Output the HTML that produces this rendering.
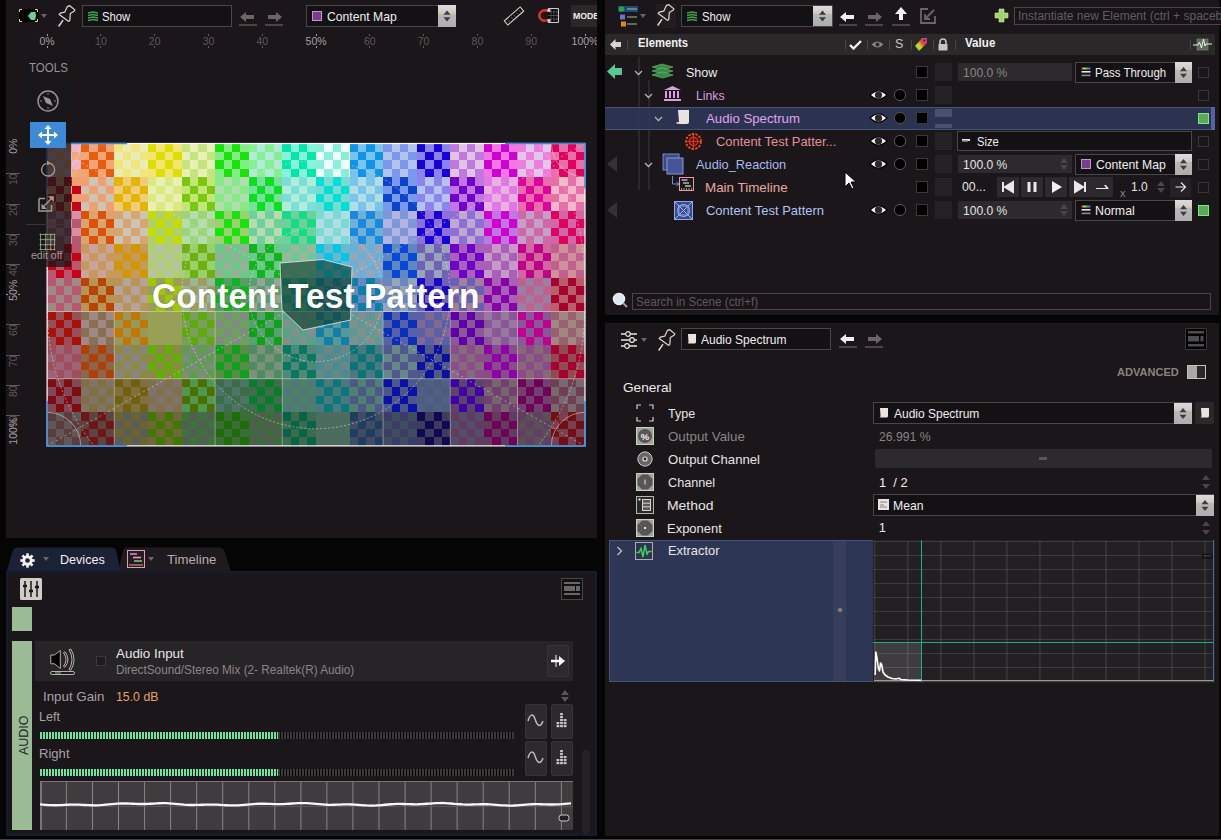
<!DOCTYPE html><html><head><meta charset="utf-8"><style>
*{box-sizing:border-box}
html{background:#050505;margin:0;padding:0;overflow:hidden}
body{margin:0;width:1221px;height:840px;background:#050505;position:relative;overflow:hidden;font-family:"Liberation Sans",sans-serif;color:#e8e4e6}
.a{position:absolute}
.pn{position:absolute;background:#1a1619}
.t{position:absolute;white-space:nowrap;line-height:1}
.cb{position:absolute;border:1px solid #4a4548;background:#141114}
.sp{position:absolute;background:linear-gradient(#dcdcdc 0%,#cccccc 34%,#d8c8a0 34%,#d8c8a0 40%,#b8b8b8 40%,#aeaeae 100%)}
.hdr{position:absolute;background:#2a2829}
</style></head><body>
<div class="pn" style="left:6px;top:0;width:591px;height:538px"></div>
<div class="a" style="left:19px;top:9px;width:20px;height:13px;background:#000"></div>
<svg class="a" style="left:18px;top:8px" width="24" height="16"><g stroke="#d8d4d0" stroke-width="1" fill="none"><path d="M1.5 4V1.5H4M17 1.5h2.5V4M19.5 11v2.5H17M4 13.5H1.5V11"/></g><path d="M10 8l3-4h4.5l0.5 4-1 4h-4z" fill="#68d098"/></svg>
<svg class="a" style="left:41px;top:14px" width="7" height="5"><path d="M0 0h6l-3 4z" fill="#6a6668"/></svg>
<svg class="a" style="left:56px;top:5px" width="22" height="24" viewBox="0 0 22 24"><g fill="none" stroke="#e0d8d0" stroke-width="1.2" stroke-linejoin="round"><path d="M11.4 1.4L13.8 0.7 18.9 4.9 18.1 6.2 14.3 8.6 13.8 15.4 12.8 16.4 3.2 9.4 4.3 8.1 8.7 7.2Z"/><path d="M7 15.2L2.7 21.5" stroke-width="1.5"/></g></svg>
<div class="cb" style="left:82px;top:5px;width:150px;height:22px"></div>
<svg class="a" style="left:87px;top:11px" width="12" height="11"><g stroke="#40a050" stroke-width="1.6"><path d="M1 2l5-1 5 1M1 4.5l5-1 5 1M1 7l5-1 5 1M1 9.5l5-1 5 1"/></g></svg>
<div class="t" style="left:101.90px;top:9.90px;font-size:13px;color:#f0ecee;font-weight:normal;transform:scaleX(0.8693);transform-origin:0 0;">Show</div>
<svg class="a" style="left:239px;top:11px" width="19" height="16"><path d="M1 6l6-5v3h8v4H7v3z" fill="#6e6468"/><rect x="0" y="13" width="18" height="2" fill="#4a4446"/></svg>
<svg class="a" style="left:265px;top:11px" width="19" height="16"><path d="M17 6l-6-5v3H3v4h8v3z" fill="#6e6468"/><rect x="0" y="13" width="18" height="2" fill="#4a4446"/></svg>
<div class="cb" style="left:306px;top:5px;width:150px;height:22px"></div>
<div class="a" style="left:312px;top:11px;width:10px;height:10px;background:#7a3f8a;border:1px solid #c890d8"></div>
<div class="t" style="left:327.10px;top:10.00px;font-size:13px;color:#f0ecee;font-weight:normal;transform:scaleX(0.9366);transform-origin:0 0;">Content Map</div>
<div class="sp" style="left:438px;top:5px;width:18px;height:22px"></div><svg class="a" style="left:438px;top:5px" width="18" height="22"><path d="M5.5 9.8l3.5-4.3 3.5 4.3z M5.5 12.2l3.5 4.3 3.5-4.3z" fill="#3e3c3c"/></svg>
<svg class="a" style="left:502px;top:5px" width="24" height="22"><g transform="rotate(-41 12 11)"><rect x="1.5" y="8.3" width="21" height="5.4" fill="#0a0a0a" stroke="#d8d0c8" stroke-width="1.1"/><path d="M5.5 10v2.5M9 10v2.5M12.5 10v2.5M16 10v2.5M19.5 10v2.5" stroke="#8a8a8a" stroke-width=".8"/></g></svg>
<svg class="a" style="left:537px;top:7px" width="24" height="18"><rect x="11" y="1.5" width="11" height="14" fill="#050505"/><path d="M14 1.5v14M17 1.5v14M20 1.5v14M11 5h11M11 8.5h11M11 12h11" stroke="#707070" stroke-width="0.6"/><path d="M11 1.5H21.5V15.5H11" fill="none" stroke="#e0e0e0" stroke-width="0.9"/><path d="M11.5 3.5H7.5a5 5 0 0 0 0 10h4" fill="none" stroke="#c81e14" stroke-width="2.8"/><path d="M11.5 3H7.5a5.5 5.5 0 0 0 0 11" fill="none" stroke="#f0a080" stroke-width=".7" opacity=".7"/><rect x="10.5" y="2.2" width="3" height="2.6" fill="#d0e0f0"/><rect x="10.5" y="12.2" width="3" height="2.6" fill="#d0e0f0"/></svg>
<div class="a" style="left:571px;top:5px;width:26px;height:22px;background:#2a2829;overflow:hidden"><div class="t" style="left:1.5px;top:6.6px;font-size:9px;font-weight:bold;color:#f0ecee;transform:scaleX(0.97);transform-origin:0 0">MODE</div></div>
<div class="t" style="left:17.1px;top:35.91px;width:60px;text-align:center;font-size:10.5px;color:#a8a0a2">0%</div>
<div class="a" style="left:46.6px;top:34px;width:1px;height:2px;background:#a8a0a2"></div>
<div class="a" style="left:46.6px;top:46px;width:1px;height:2px;background:#a8a0a2"></div>
<div class="t" style="left:-17.5px;top:141.3px;width:60px;text-align:center;font-size:10.5px;color:#a8a0a2;transform:rotate(-90deg)">0%</div>
<div class="t" style="left:70.9px;top:35.91px;width:60px;text-align:center;font-size:10.5px;color:#5e585a">10</div>
<div class="a" style="left:100.4px;top:34px;width:1px;height:2px;background:#5e585a"></div>
<div class="a" style="left:100.4px;top:46px;width:1px;height:2px;background:#5e585a"></div>
<div class="t" style="left:-17.5px;top:174.2px;width:60px;text-align:center;font-size:10.5px;color:#5e585a;transform:rotate(-90deg)">10</div>
<div class="a" style="left:6px;top:173.2px;width:14px;height:1px;background:#5e585a"></div>
<div class="t" style="left:124.7px;top:35.91px;width:60px;text-align:center;font-size:10.5px;color:#5e585a">20</div>
<div class="a" style="left:154.2px;top:34px;width:1px;height:2px;background:#5e585a"></div>
<div class="a" style="left:154.2px;top:46px;width:1px;height:2px;background:#5e585a"></div>
<div class="t" style="left:-17.5px;top:204.5px;width:60px;text-align:center;font-size:10.5px;color:#5e585a;transform:rotate(-90deg)">20</div>
<div class="a" style="left:6px;top:203.5px;width:14px;height:1px;background:#5e585a"></div>
<div class="t" style="left:178.5px;top:35.91px;width:60px;text-align:center;font-size:10.5px;color:#5e585a">30</div>
<div class="a" style="left:208.0px;top:34px;width:1px;height:2px;background:#5e585a"></div>
<div class="a" style="left:208.0px;top:46px;width:1px;height:2px;background:#5e585a"></div>
<div class="t" style="left:-17.5px;top:234.7px;width:60px;text-align:center;font-size:10.5px;color:#5e585a;transform:rotate(-90deg)">30</div>
<div class="a" style="left:6px;top:233.7px;width:14px;height:1px;background:#5e585a"></div>
<div class="t" style="left:232.3px;top:35.91px;width:60px;text-align:center;font-size:10.5px;color:#5e585a">40</div>
<div class="a" style="left:261.8px;top:34px;width:1px;height:2px;background:#5e585a"></div>
<div class="a" style="left:261.8px;top:46px;width:1px;height:2px;background:#5e585a"></div>
<div class="t" style="left:-17.5px;top:265.0px;width:60px;text-align:center;font-size:10.5px;color:#5e585a;transform:rotate(-90deg)">40</div>
<div class="a" style="left:6px;top:264.0px;width:14px;height:1px;background:#5e585a"></div>
<div class="t" style="left:286.1px;top:35.91px;width:60px;text-align:center;font-size:10.5px;color:#a8a0a2">50%</div>
<div class="a" style="left:315.6px;top:34px;width:1px;height:2px;background:#a8a0a2"></div>
<div class="a" style="left:315.6px;top:46px;width:1px;height:2px;background:#a8a0a2"></div>
<div class="t" style="left:-17.5px;top:285.0px;width:60px;text-align:center;font-size:10.5px;color:#a8a0a2;transform:rotate(-90deg)">50%</div>
<div class="a" style="left:6px;top:294.2px;width:2px;height:1px;background:#a8a0a2"></div><div class="a" style="left:18px;top:294.2px;width:2px;height:1px;background:#a8a0a2"></div>
<div class="t" style="left:339.8px;top:35.91px;width:60px;text-align:center;font-size:10.5px;color:#5e585a">60</div>
<div class="a" style="left:369.3px;top:34px;width:1px;height:2px;background:#5e585a"></div>
<div class="a" style="left:369.3px;top:46px;width:1px;height:2px;background:#5e585a"></div>
<div class="t" style="left:-17.5px;top:325.4px;width:60px;text-align:center;font-size:10.5px;color:#5e585a;transform:rotate(-90deg)">60</div>
<div class="a" style="left:6px;top:324.4px;width:14px;height:1px;background:#5e585a"></div>
<div class="t" style="left:393.6px;top:35.91px;width:60px;text-align:center;font-size:10.5px;color:#5e585a">70</div>
<div class="a" style="left:423.1px;top:34px;width:1px;height:2px;background:#5e585a"></div>
<div class="a" style="left:423.1px;top:46px;width:1px;height:2px;background:#5e585a"></div>
<div class="t" style="left:-17.5px;top:355.7px;width:60px;text-align:center;font-size:10.5px;color:#5e585a;transform:rotate(-90deg)">70</div>
<div class="a" style="left:6px;top:354.7px;width:14px;height:1px;background:#5e585a"></div>
<div class="t" style="left:447.4px;top:35.91px;width:60px;text-align:center;font-size:10.5px;color:#5e585a">80</div>
<div class="a" style="left:476.9px;top:34px;width:1px;height:2px;background:#5e585a"></div>
<div class="a" style="left:476.9px;top:46px;width:1px;height:2px;background:#5e585a"></div>
<div class="t" style="left:-17.5px;top:385.9px;width:60px;text-align:center;font-size:10.5px;color:#5e585a;transform:rotate(-90deg)">80</div>
<div class="a" style="left:6px;top:384.9px;width:14px;height:1px;background:#5e585a"></div>
<div class="t" style="left:501.2px;top:35.91px;width:60px;text-align:center;font-size:10.5px;color:#5e585a">90</div>
<div class="a" style="left:530.7px;top:34px;width:1px;height:2px;background:#5e585a"></div>
<div class="a" style="left:530.7px;top:46px;width:1px;height:2px;background:#5e585a"></div>
<div class="t" style="left:-17.5px;top:416.2px;width:60px;text-align:center;font-size:10.5px;color:#5e585a;transform:rotate(-90deg)">90</div>
<div class="a" style="left:6px;top:415.2px;width:14px;height:1px;background:#5e585a"></div>
<div class="t" style="left:555.0px;top:35.91px;width:60px;text-align:center;font-size:10.5px;color:#a8a0a2">100%</div>
<div class="a" style="left:584.5px;top:34px;width:1px;height:2px;background:#a8a0a2"></div>
<div class="a" style="left:584.5px;top:46px;width:1px;height:2px;background:#a8a0a2"></div>
<div class="t" style="left:-17.5px;top:425.5px;width:60px;text-align:center;font-size:10.5px;color:#a8a0a2;transform:rotate(-90deg)">100%</div>
<div class="a" style="left:597px;top:0;width:8px;height:540px;background:#050505"></div>
<svg style="position:absolute;left:0;top:0" width="1221" height="840" viewBox="0 0 1221 840">
<defs><path id="ck" d="M0 0h8.4v8.4H0zM16.8 0h8.4v8.4h-8.4zM8.4 8.4h8.4v8.4H8.4zM25.2 8.4h8.4v8.4h-8.4zM0 16.8h8.4v8.4H0zM16.8 16.8h8.4v8.4h-8.4zM8.4 25.2h8.4v8.4H8.4zM25.2 25.2h8.4v8.4h-8.4z"/></defs>
<g shape-rendering="crispEdges">
<rect x="47.1" y="143.5" width="33.6" height="33.6" fill="#ecb4cc"/><use href="#ck" x="47.1" y="143.5" fill="#f0a878"/>
<rect x="80.7" y="143.5" width="33.6" height="33.6" fill="#f0a478"/><use href="#ck" x="80.7" y="143.5" fill="#e85c0c"/>
<rect x="114.3" y="143.5" width="33.6" height="33.6" fill="#e8ecb8"/><use href="#ck" x="114.3" y="143.5" fill="#f4e47c"/>
<rect x="147.9" y="143.5" width="33.6" height="33.6" fill="#f4e474"/><use href="#ck" x="147.9" y="143.5" fill="#dce000"/>
<rect x="181.5" y="143.5" width="33.6" height="33.6" fill="#e8f0b8"/><use href="#ck" x="181.5" y="143.5" fill="#c4e47c"/>
<rect x="215.1" y="143.5" width="33.6" height="33.6" fill="#84ec84"/><use href="#ck" x="215.1" y="143.5" fill="#18e40c"/>
<rect x="248.7" y="143.5" width="33.6" height="33.6" fill="#b4e8d8"/><use href="#ck" x="248.7" y="143.5" fill="#84f094"/>
<rect x="282.3" y="143.5" width="33.6" height="33.6" fill="#84f4dc"/><use href="#ck" x="282.3" y="143.5" fill="#00e8a8"/>
<rect x="315.9" y="143.5" width="33.6" height="33.6" fill="#eefcfc"/><use href="#ck" x="315.9" y="143.5" fill="#88f0d8"/>
<rect x="349.5" y="143.5" width="33.6" height="33.6" fill="#78c4ec"/><use href="#ck" x="349.5" y="143.5" fill="#1094e8"/>
<rect x="383.1" y="143.5" width="33.6" height="33.6" fill="#b4c4ec"/><use href="#ck" x="383.1" y="143.5" fill="#7c98ec"/>
<rect x="416.7" y="143.5" width="33.6" height="33.6" fill="#8c84ec"/><use href="#ck" x="416.7" y="143.5" fill="#1800d8"/>
<rect x="450.3" y="143.5" width="33.6" height="33.6" fill="#e0c4e4"/><use href="#ck" x="450.3" y="143.5" fill="#c078e0"/>
<rect x="483.9" y="143.5" width="33.6" height="33.6" fill="#f078e0"/><use href="#ck" x="483.9" y="143.5" fill="#d000d0"/>
<rect x="517.5" y="143.5" width="33.6" height="33.6" fill="#e0c8e8"/><use href="#ck" x="517.5" y="143.5" fill="#f07ce0"/>
<rect x="551.1" y="143.5" width="33.6" height="33.6" fill="#e870a8"/><use href="#ck" x="551.1" y="143.5" fill="#e00060"/>
<rect x="47.1" y="177.1" width="33.6" height="33.6" fill="#f0a070"/><use href="#ck" x="47.1" y="177.1" fill="#c80018"/>
<rect x="80.7" y="177.1" width="33.6" height="33.6" fill="#ccc4b4"/><use href="#ck" x="80.7" y="177.1" fill="#f0a070"/>
<rect x="114.3" y="177.1" width="33.6" height="33.6" fill="#f0cc78"/><use href="#ck" x="114.3" y="177.1" fill="#e4b400"/>
<rect x="147.9" y="177.1" width="33.6" height="33.6" fill="#e8f0b4"/><use href="#ck" x="147.9" y="177.1" fill="#dce880"/>
<rect x="181.5" y="177.1" width="33.6" height="33.6" fill="#c4e47c"/><use href="#ck" x="181.5" y="177.1" fill="#78c80c"/>
<rect x="215.1" y="177.1" width="33.6" height="33.6" fill="#b4dcb0"/><use href="#ck" x="215.1" y="177.1" fill="#84ec84"/>
<rect x="248.7" y="177.1" width="33.6" height="33.6" fill="#78e09c"/><use href="#ck" x="248.7" y="177.1" fill="#08e020"/>
<rect x="282.3" y="177.1" width="33.6" height="33.6" fill="#b4ecdc"/><use href="#ck" x="282.3" y="177.1" fill="#78e0d8"/>
<rect x="315.9" y="177.1" width="33.6" height="33.6" fill="#78dcd4"/><use href="#ck" x="315.9" y="177.1" fill="#00e0d4"/>
<rect x="349.5" y="177.1" width="33.6" height="33.6" fill="#b4dce4"/><use href="#ck" x="349.5" y="177.1" fill="#78c4ec"/>
<rect x="383.1" y="177.1" width="33.6" height="33.6" fill="#7c98ec"/><use href="#ck" x="383.1" y="177.1" fill="#0844cc"/>
<rect x="416.7" y="177.1" width="33.6" height="33.6" fill="#b4c4ec"/><use href="#ck" x="416.7" y="177.1" fill="#8c84ec"/>
<rect x="450.3" y="177.1" width="33.6" height="33.6" fill="#c078e0"/><use href="#ck" x="450.3" y="177.1" fill="#7000cc"/>
<rect x="483.9" y="177.1" width="33.6" height="33.6" fill="#eab0e0"/><use href="#ck" x="483.9" y="177.1" fill="#e078e8"/>
<rect x="517.5" y="177.1" width="33.6" height="33.6" fill="#e870a8"/><use href="#ck" x="517.5" y="177.1" fill="#e000a0"/>
<rect x="551.1" y="177.1" width="33.6" height="33.6" fill="#f0b8c8"/><use href="#ck" x="551.1" y="177.1" fill="#e870a8"/>
<rect x="47.1" y="210.7" width="33.6" height="33.6" fill="#d890a8"/><use href="#ck" x="47.1" y="210.7" fill="#b85870"/>
<rect x="80.7" y="210.7" width="33.6" height="33.6" fill="#d8a470"/><use href="#ck" x="80.7" y="210.7" fill="#dc5008"/>
<rect x="114.3" y="210.7" width="33.6" height="33.6" fill="#ccc4b4"/><use href="#ck" x="114.3" y="210.7" fill="#d8a470"/>
<rect x="147.9" y="210.7" width="33.6" height="33.6" fill="#b0d070"/><use href="#ck" x="147.9" y="210.7" fill="#c4dc00"/>
<rect x="181.5" y="210.7" width="33.6" height="33.6" fill="#b4dcb0"/><use href="#ck" x="181.5" y="210.7" fill="#9cd478"/>
<rect x="215.1" y="210.7" width="33.6" height="33.6" fill="#9cd070"/><use href="#ck" x="215.1" y="210.7" fill="#18e40c"/>
<rect x="248.7" y="210.7" width="33.6" height="33.6" fill="#b4dcb0"/><use href="#ck" x="248.7" y="210.7" fill="#70d09c"/>
<rect x="282.3" y="210.7" width="33.6" height="33.6" fill="#70d09c"/><use href="#ck" x="282.3" y="210.7" fill="#14dc84"/>
<rect x="315.9" y="210.7" width="33.6" height="33.6" fill="#b4dce4"/><use href="#ck" x="315.9" y="210.7" fill="#78dcd4"/>
<rect x="349.5" y="210.7" width="33.6" height="33.6" fill="#70b0d4"/><use href="#ck" x="349.5" y="210.7" fill="#1888e0"/>
<rect x="383.1" y="210.7" width="33.6" height="33.6" fill="#b4b4e0"/><use href="#ck" x="383.1" y="210.7" fill="#7c98d8"/>
<rect x="416.7" y="210.7" width="33.6" height="33.6" fill="#9070d8"/><use href="#ck" x="416.7" y="210.7" fill="#1800d8"/>
<rect x="450.3" y="210.7" width="33.6" height="33.6" fill="#c0a8d0"/><use href="#ck" x="450.3" y="210.7" fill="#8c70d8"/>
<rect x="483.9" y="210.7" width="33.6" height="33.6" fill="#c078e0"/><use href="#ck" x="483.9" y="210.7" fill="#d000d0"/>
<rect x="517.5" y="210.7" width="33.6" height="33.6" fill="#c4a0c8"/><use href="#ck" x="517.5" y="210.7" fill="#d068a8"/>
<rect x="551.1" y="210.7" width="33.6" height="33.6" fill="#d068a8"/><use href="#ck" x="551.1" y="210.7" fill="#e00060"/>
<rect x="47.1" y="244.3" width="33.6" height="33.6" fill="#b85870"/><use href="#ck" x="47.1" y="244.3" fill="#c80018"/>
<rect x="80.7" y="244.3" width="33.6" height="33.6" fill="#c8a49c"/><use href="#ck" x="80.7" y="244.3" fill="#c8985c"/>
<rect x="114.3" y="244.3" width="33.6" height="33.6" fill="#c8985c"/><use href="#ck" x="114.3" y="244.3" fill="#d09800"/>
<rect x="147.9" y="244.3" width="33.6" height="33.6" fill="#b4c4a0"/><use href="#ck" x="147.9" y="244.3" fill="#b0d070"/>
<rect x="181.5" y="244.3" width="33.6" height="33.6" fill="#98d070"/><use href="#ck" x="181.5" y="244.3" fill="#70b00c"/>
<rect x="215.1" y="244.3" width="33.6" height="33.6" fill="#98b098"/><use href="#ck" x="215.1" y="244.3" fill="#6cc888"/>
<rect x="248.7" y="244.3" width="33.6" height="33.6" fill="#6cc888"/><use href="#ck" x="248.7" y="244.3" fill="#10b41c"/>
<rect x="282.3" y="244.3" width="33.6" height="33.6" fill="#98b898"/><use href="#ck" x="282.3" y="244.3" fill="#6cc898"/>
<rect x="315.9" y="244.3" width="33.6" height="33.6" fill="#70b4d4"/><use href="#ck" x="315.9" y="244.3" fill="#00c8e0"/>
<rect x="349.5" y="244.3" width="33.6" height="33.6" fill="#98a4b8"/><use href="#ck" x="349.5" y="244.3" fill="#68b0d8"/>
<rect x="383.1" y="244.3" width="33.6" height="33.6" fill="#6088c0"/><use href="#ck" x="383.1" y="244.3" fill="#0848d8"/>
<rect x="416.7" y="244.3" width="33.6" height="33.6" fill="#98a4b8"/><use href="#ck" x="416.7" y="244.3" fill="#7060b8"/>
<rect x="450.3" y="244.3" width="33.6" height="33.6" fill="#a860b8"/><use href="#ck" x="450.3" y="244.3" fill="#7000cc"/>
<rect x="483.9" y="244.3" width="33.6" height="33.6" fill="#c898c8"/><use href="#ck" x="483.9" y="244.3" fill="#a860b8"/>
<rect x="517.5" y="244.3" width="33.6" height="33.6" fill="#d068a0"/><use href="#ck" x="517.5" y="244.3" fill="#c00088"/>
<rect x="551.1" y="244.3" width="33.6" height="33.6" fill="#d09098"/><use href="#ck" x="551.1" y="244.3" fill="#c06090"/>
<rect x="47.1" y="277.9" width="33.6" height="33.6" fill="#a08888"/><use href="#ck" x="47.1" y="277.9" fill="#b85870"/>
<rect x="80.7" y="277.9" width="33.6" height="33.6" fill="#b89458"/><use href="#ck" x="80.7" y="277.9" fill="#b84400"/>
<rect x="114.3" y="277.9" width="33.6" height="33.6" fill="#b4a49c"/><use href="#ck" x="114.3" y="277.9" fill="#b89458"/>
<rect x="147.9" y="277.9" width="33.6" height="33.6" fill="#98a058"/><use href="#ck" x="147.9" y="277.9" fill="#a0c800"/>
<rect x="181.5" y="277.9" width="33.6" height="33.6" fill="#98b89c"/><use href="#ck" x="181.5" y="277.9" fill="#a09c60"/>
<rect x="215.1" y="277.9" width="33.6" height="33.6" fill="#589c68"/><use href="#ck" x="215.1" y="277.9" fill="#10b41c"/>
<rect x="248.7" y="277.9" width="33.6" height="33.6" fill="#98a498"/><use href="#ck" x="248.7" y="277.9" fill="#58a070"/>
<rect x="282.3" y="277.9" width="33.6" height="33.6" fill="#60a090"/><use href="#ck" x="282.3" y="277.9" fill="#10a080"/>
<rect x="315.9" y="277.9" width="33.6" height="33.6" fill="#6888b0"/><use href="#ck" x="315.9" y="277.9" fill="#0880a0"/>
<rect x="349.5" y="277.9" width="33.6" height="33.6" fill="#6888c0"/><use href="#ck" x="349.5" y="277.9" fill="#0880a8"/>
<rect x="383.1" y="277.9" width="33.6" height="33.6" fill="#98a4b8"/><use href="#ck" x="383.1" y="277.9" fill="#6888c0"/>
<rect x="416.7" y="277.9" width="33.6" height="33.6" fill="#7060b8"/><use href="#ck" x="416.7" y="277.9" fill="#1808c8"/>
<rect x="450.3" y="277.9" width="33.6" height="33.6" fill="#a08098"/><use href="#ck" x="450.3" y="277.9" fill="#6860b8"/>
<rect x="483.9" y="277.9" width="33.6" height="33.6" fill="#a860b8"/><use href="#ck" x="483.9" y="277.9" fill="#8800a8"/>
<rect x="517.5" y="277.9" width="33.6" height="33.6" fill="#9880a0"/><use href="#ck" x="517.5" y="277.9" fill="#c06090"/>
<rect x="551.1" y="277.9" width="33.6" height="33.6" fill="#b86068"/><use href="#ck" x="551.1" y="277.9" fill="#a80030"/>
<rect x="47.1" y="311.5" width="33.6" height="33.6" fill="#985058"/><use href="#ck" x="47.1" y="311.5" fill="#a81008"/>
<rect x="80.7" y="311.5" width="33.6" height="33.6" fill="#a08888"/><use href="#ck" x="80.7" y="311.5" fill="#887050"/>
<rect x="114.3" y="311.5" width="33.6" height="33.6" fill="#98985c"/><use href="#ck" x="114.3" y="311.5" fill="#c07800"/>
<rect x="147.9" y="311.5" width="33.6" height="33.6" fill="#98a058"/><use href="#ck" x="147.9" y="311.5" fill="#98a058"/>
<rect x="181.5" y="311.5" width="33.6" height="33.6" fill="#78a05c"/><use href="#ck" x="181.5" y="311.5" fill="#60a810"/>
<rect x="215.1" y="311.5" width="33.6" height="33.6" fill="#808c80"/><use href="#ck" x="215.1" y="311.5" fill="#70a060"/>
<rect x="248.7" y="311.5" width="33.6" height="33.6" fill="#58a070"/><use href="#ck" x="248.7" y="311.5" fill="#10a01c"/>
<rect x="282.3" y="311.5" width="33.6" height="33.6" fill="#80908c"/><use href="#ck" x="282.3" y="311.5" fill="#58a088"/>
<rect x="315.9" y="311.5" width="33.6" height="33.6" fill="#589898"/><use href="#ck" x="315.9" y="311.5" fill="#1080a8"/>
<rect x="349.5" y="311.5" width="33.6" height="33.6" fill="#80908c"/><use href="#ck" x="349.5" y="311.5" fill="#609898"/>
<rect x="383.1" y="311.5" width="33.6" height="33.6" fill="#5860a8"/><use href="#ck" x="383.1" y="311.5" fill="#0830b8"/>
<rect x="416.7" y="311.5" width="33.6" height="33.6" fill="#806890"/><use href="#ck" x="416.7" y="311.5" fill="#5860a8"/>
<rect x="450.3" y="311.5" width="33.6" height="33.6" fill="#885898"/><use href="#ck" x="450.3" y="311.5" fill="#6000a8"/>
<rect x="483.9" y="311.5" width="33.6" height="33.6" fill="#885898"/><use href="#ck" x="483.9" y="311.5" fill="#9878a0"/>
<rect x="517.5" y="311.5" width="33.6" height="33.6" fill="#885898"/><use href="#ck" x="517.5" y="311.5" fill="#c00090"/>
<rect x="551.1" y="311.5" width="33.6" height="33.6" fill="#a08880"/><use href="#ck" x="551.1" y="311.5" fill="#986070"/>
<rect x="47.1" y="345.1" width="33.6" height="33.6" fill="#9c6478"/><use href="#ck" x="47.1" y="345.1" fill="#a04e5c"/>
<rect x="80.7" y="345.1" width="33.6" height="33.6" fill="#8c6450"/><use href="#ck" x="80.7" y="345.1" fill="#b04000"/>
<rect x="114.3" y="345.1" width="33.6" height="33.6" fill="#888480"/><use href="#ck" x="114.3" y="345.1" fill="#8c8848"/>
<rect x="147.9" y="345.1" width="33.6" height="33.6" fill="#8c8848"/><use href="#ck" x="147.9" y="345.1" fill="#60b000"/>
<rect x="181.5" y="345.1" width="33.6" height="33.6" fill="#7c8c7c"/><use href="#ck" x="181.5" y="345.1" fill="#609c50"/>
<rect x="215.1" y="345.1" width="33.6" height="33.6" fill="#588c48"/><use href="#ck" x="215.1" y="345.1" fill="#10a01c"/>
<rect x="248.7" y="345.1" width="33.6" height="33.6" fill="#7c907c"/><use href="#ck" x="248.7" y="345.1" fill="#4c8c60"/>
<rect x="282.3" y="345.1" width="33.6" height="33.6" fill="#508878"/><use href="#ck" x="282.3" y="345.1" fill="#087860"/>
<rect x="315.9" y="345.1" width="33.6" height="33.6" fill="#688888"/><use href="#ck" x="315.9" y="345.1" fill="#4c8c90"/>
<rect x="349.5" y="345.1" width="33.6" height="33.6" fill="#4c7880"/><use href="#ck" x="349.5" y="345.1" fill="#087478"/>
<rect x="383.1" y="345.1" width="33.6" height="33.6" fill="#688888"/><use href="#ck" x="383.1" y="345.1" fill="#505890"/>
<rect x="416.7" y="345.1" width="33.6" height="33.6" fill="#505888"/><use href="#ck" x="416.7" y="345.1" fill="#0c10a0"/>
<rect x="450.3" y="345.1" width="33.6" height="33.6" fill="#846c7c"/><use href="#ck" x="450.3" y="345.1" fill="#8c4c8c"/>
<rect x="483.9" y="345.1" width="33.6" height="33.6" fill="#884c88"/><use href="#ck" x="483.9" y="345.1" fill="#9000a8"/>
<rect x="517.5" y="345.1" width="33.6" height="33.6" fill="#884c88"/><use href="#ck" x="517.5" y="345.1" fill="#886878"/>
<rect x="551.1" y="345.1" width="33.6" height="33.6" fill="#904c50"/><use href="#ck" x="551.1" y="345.1" fill="#a80030"/>
<rect x="47.1" y="378.7" width="33.6" height="33.6" fill="#804858"/><use href="#ck" x="47.1" y="378.7" fill="#800c10"/>
<rect x="80.7" y="378.7" width="33.6" height="33.6" fill="#807468"/><use href="#ck" x="80.7" y="378.7" fill="#807040"/>
<rect x="114.3" y="378.7" width="33.6" height="33.6" fill="#807040"/><use href="#ck" x="114.3" y="378.7" fill="#706010"/>
<rect x="147.9" y="378.7" width="33.6" height="33.6" fill="#807468"/><use href="#ck" x="147.9" y="378.7" fill="#807050"/>
<rect x="181.5" y="378.7" width="33.6" height="33.6" fill="#509850"/><use href="#ck" x="181.5" y="378.7" fill="#4c7000"/>
<rect x="215.1" y="378.7" width="33.6" height="33.6" fill="#4c7468"/><use href="#ck" x="215.1" y="378.7" fill="#3c6c48"/>
<rect x="248.7" y="378.7" width="33.6" height="33.6" fill="#406c50"/><use href="#ck" x="248.7" y="378.7" fill="#087c28"/>
<rect x="282.3" y="378.7" width="33.6" height="33.6" fill="#507878"/><use href="#ck" x="282.3" y="378.7" fill="#4c8068"/>
<rect x="315.9" y="378.7" width="33.6" height="33.6" fill="#4c7880"/><use href="#ck" x="315.9" y="378.7" fill="#087878"/>
<rect x="349.5" y="378.7" width="33.6" height="33.6" fill="#508070"/><use href="#ck" x="349.5" y="378.7" fill="#4c5888"/>
<rect x="383.1" y="378.7" width="33.6" height="33.6" fill="#4c5888"/><use href="#ck" x="383.1" y="378.7" fill="#0c10a8"/>
<rect x="416.7" y="378.7" width="33.6" height="33.6" fill="#506080"/><use href="#ck" x="416.7" y="378.7" fill="#4c5c80"/>
<rect x="450.3" y="378.7" width="33.6" height="33.6" fill="#5c4468"/><use href="#ck" x="450.3" y="378.7" fill="#4000a8"/>
<rect x="483.9" y="378.7" width="33.6" height="33.6" fill="#786470"/><use href="#ck" x="483.9" y="378.7" fill="#704070"/>
<rect x="517.5" y="378.7" width="33.6" height="33.6" fill="#704070"/><use href="#ck" x="517.5" y="378.7" fill="#700058"/>
<rect x="551.1" y="378.7" width="33.6" height="33.6" fill="#786870"/><use href="#ck" x="551.1" y="378.7" fill="#704050"/>
<rect x="47.1" y="412.3" width="33.6" height="33.6" fill="#605858"/><use href="#ck" x="47.1" y="412.3" fill="#5c3c3c"/>
<rect x="80.7" y="412.3" width="33.6" height="33.6" fill="#5c4440"/><use href="#ck" x="80.7" y="412.3" fill="#701418"/>
<rect x="114.3" y="412.3" width="33.6" height="33.6" fill="#5c5c58"/><use href="#ck" x="114.3" y="412.3" fill="#6c6430"/>
<rect x="147.9" y="412.3" width="33.6" height="33.6" fill="#706838"/><use href="#ck" x="147.9" y="412.3" fill="#407800"/>
<rect x="181.5" y="412.3" width="33.6" height="33.6" fill="#506050"/><use href="#ck" x="181.5" y="412.3" fill="#407040"/>
<rect x="215.1" y="412.3" width="33.6" height="33.6" fill="#3c6c38"/><use href="#ck" x="215.1" y="412.3" fill="#206c08"/>
<rect x="248.7" y="412.3" width="33.6" height="33.6" fill="#505c50"/><use href="#ck" x="248.7" y="412.3" fill="#3c6c3c"/>
<rect x="282.3" y="412.3" width="33.6" height="33.6" fill="#3c6c50"/><use href="#ck" x="282.3" y="412.3" fill="#086444"/>
<rect x="315.9" y="412.3" width="33.6" height="33.6" fill="#4c6c60"/><use href="#ck" x="315.9" y="412.3" fill="#4c6c60"/>
<rect x="349.5" y="412.3" width="33.6" height="33.6" fill="#404c60"/><use href="#ck" x="349.5" y="412.3" fill="#203c60"/>
<rect x="383.1" y="412.3" width="33.6" height="33.6" fill="#404c60"/><use href="#ck" x="383.1" y="412.3" fill="#3c3c68"/>
<rect x="416.7" y="412.3" width="33.6" height="33.6" fill="#3c3c60"/><use href="#ck" x="416.7" y="412.3" fill="#100850"/>
<rect x="450.3" y="412.3" width="33.6" height="33.6" fill="#544c68"/><use href="#ck" x="450.3" y="412.3" fill="#603c60"/>
<rect x="483.9" y="412.3" width="33.6" height="33.6" fill="#603c60"/><use href="#ck" x="483.9" y="412.3" fill="#700058"/>
<rect x="517.5" y="412.3" width="33.6" height="33.6" fill="#5c5058"/><use href="#ck" x="517.5" y="412.3" fill="#604060"/>
<rect x="551.1" y="412.3" width="33.6" height="33.6" fill="#784050"/><use href="#ck" x="551.1" y="412.3" fill="#701014"/>
</g>
<g fill="none" stroke="#e8e0d0" stroke-opacity="0.55" stroke-width="1">
<line x1="47.1" y1="311.5" x2="585" y2="311.5" stroke-opacity="0.5"/>
<line x1="47.1" y1="378.7" x2="585" y2="378.7" stroke-opacity="0.5"/>
<line x1="114.3" y1="311.5" x2="114.3" y2="445.9" stroke-opacity="0.45"/>
<line x1="215.1" y1="311.5" x2="215.1" y2="445.9" stroke-opacity="0.45"/>
<line x1="282.3" y1="311.5" x2="282.3" y2="445.9" stroke-opacity="0.45"/>
<line x1="383.1" y1="311.5" x2="383.1" y2="445.9" stroke-opacity="0.45"/>
<line x1="450.3" y1="311.5" x2="450.3" y2="445.9" stroke-opacity="0.45"/>
<line x1="517.5" y1="311.5" x2="517.5" y2="445.9" stroke-opacity="0.45"/>
<circle cx="315.90000000000003" cy="294.70000000000005" r="134" stroke-dasharray="2 2"/>
<circle cx="315.90000000000003" cy="294.70000000000005" r="67" stroke-dasharray="2 2"/>
<line x1="47.1" y1="445.9" x2="585" y2="143.5" stroke-dasharray="2 3"/>
<path d="M47.6 312 A213.5 213.5 0 0 0 94 445.9 M584.5 312 A213.5 213.5 0 0 1 538.0 445.9 M47.6 277.4 A213.5 213.5 0 0 1 94 143.5 M584.5 277.4 A213.5 213.5 0 0 0 538.0 143.5" stroke-dasharray="2 2"/>
<path d="M47.1 412.29999999999995 A33.6 33.6 0 0 1 80.7 445.9 M585.0 412.29999999999995 A33.6 33.6 0 0 0 551.4 445.9 M47.1 177.1 A33.6 33.6 0 0 0 80.7 143.5 M585.0 177.1 A33.6 33.6 0 0 1 551.4 143.5"/>
<line x1="47.1" y1="143.5" x2="585" y2="445.9" stroke-dasharray="2 3"/>
</g>
<polygon points="280,263 323,259.5 352,267 350.6,320 303,330 282,310" fill="#123a2c" fill-opacity="0.62" stroke="#e8e8e8" stroke-width="1" stroke-opacity="0.8"/>
<rect x="47.1" y="143.5" width="537.9" height="302.4" fill="none" stroke="#ffffff" stroke-width="1.2"/>
<path d="M47.1 188.5V143.5H127.1 M505.0 143.5H585.0V188.5 M585.0 400.9V445.9H505.0 M127.1 445.9H47.1V400.9" fill="none" stroke="#3a8ad8" stroke-width="1.6"/>
</svg>
<div class="t" style="left:152.13px;top:279.23px;font-size:34.7px;color:#ffffff;font-weight:bold;transform:scaleX(0.9677);transform-origin:0 0;text-shadow:0 0 2px rgba(0,0,0,.3)">Content Test Pattern</div>
<div class="a" style="left:26px;top:54px;width:45px;height:212.5px;background:rgba(24,22,24,0.76)"></div>
<div class="t" style="left:28.90px;top:61.62px;font-size:12.5px;color:#9a9294;font-weight:normal;transform:scaleX(0.9257);transform-origin:0 0;">TOOLS</div>
<svg class="a" style="left:36px;top:89px" width="24" height="24"><circle cx="12" cy="12" r="10" fill="none" stroke="#9a9294" stroke-width="1.5"/><path d="M7 7l7 3 3 7-7-3z" fill="#9a9294"/><circle cx="12" cy="5" r=".8" fill="#9a9294"/><circle cx="19" cy="12" r=".8" fill="#9a9294"/><circle cx="12" cy="19" r=".8" fill="#9a9294"/><circle cx="5" cy="12" r=".8" fill="#9a9294"/></svg>
<div class="a" style="left:30px;top:122px;width:36px;height:26px;background:#3d8ad6"></div>
<svg class="a" style="left:37px;top:124px" width="22" height="22"><g stroke="#fff" stroke-width="2"><path d="M11 3v16M3 11h16"/></g><path d="M11 1l-3.5 4h7zM11 21l-3.5-4h7zM1 11l4-3.5v7zM21 11l-4-3.5v7z" fill="#fff"/></svg>
<svg class="a" style="left:38px;top:160px" width="20" height="20"><path d="M11.2 3.1A6.5 6.5 0 1 1 8.2 3.3" fill="none" stroke="#a09a9a" stroke-width="1.3"/><path d="M9 0.6l3.6 2.6-3.6 2.4z" fill="#a09a9a"/></svg>
<svg class="a" style="left:38px;top:194px" width="19" height="19"><path d="M1 4.5h6M1 4.5v12.5h12.5v-6" fill="none" stroke="#a09a9a" stroke-width="1.5"/><path d="M4.5 13.5L15 3" fill="none" stroke="#a09a9a" stroke-width="1.5"/><path d="M10 2.2h5.8V8zM3.5 9.5v5.5h5.5z" fill="#a09a9a"/></svg>
<div class="a" style="left:26px;top:224px;width:44px;height:1px;background:#38343a"></div>
<svg class="a" style="left:38px;top:232px" width="19" height="19"><g stroke="#a8a090" stroke-width="0.8" fill="none"><path d="M2 2.5h15M2 7.6h15M2 12.7h15M2 17.5h15M2.5 2v16M7.6 2v16M12.7 2v16M16.5 2v16"/></g><g fill="#60c070"><circle cx="2.5" cy="2.5" r=".9"/><circle cx="7.6" cy="2.5" r=".9"/><circle cx="12.7" cy="2.5" r=".9"/><circle cx="16.5" cy="2.5" r=".9"/><circle cx="2.5" cy="7.6" r=".9"/><circle cx="7.6" cy="7.6" r=".9"/><circle cx="12.7" cy="7.6" r=".9"/><circle cx="16.5" cy="7.6" r=".9"/><circle cx="2.5" cy="12.7" r=".9"/><circle cx="7.6" cy="12.7" r=".9"/><circle cx="12.7" cy="12.7" r=".9"/><circle cx="16.5" cy="12.7" r=".9"/><circle cx="2.5" cy="17.5" r=".9"/><circle cx="7.6" cy="17.5" r=".9"/><circle cx="12.7" cy="17.5" r=".9"/><circle cx="16.5" cy="17.5" r=".9"/></g></svg>
<div class="t" style="left:31.40px;top:249.99px;font-size:11px;color:#a09a9a;font-weight:normal;transform:scaleX(0.9536);transform-origin:0 0;">edit off</div>
<div class="pn" style="left:605px;top:0;width:614px;height:315px"></div>
<div class="hdr" style="left:605px;top:34px;width:610px;height:21px"></div>
<svg class="a" style="left:616px;top:5px" width="24" height="22"><rect x="2" y="1" width="20" height="6" fill="#1e4878"/><circle cx="5.5" cy="4" r="2.8" fill="#30a040"/><path d="M11 4h10M11 12h10M11 19h10" stroke="#a8c090" stroke-width="1.2"/><rect x="4" y="9.5" width="5" height="5" fill="#6a70d0"/><rect x="5" y="16.5" width="5" height="5" fill="#e08a10"/></svg>
<svg class="a" style="left:640px;top:14px" width="7" height="5"><path d="M0 0h6l-3 4z" fill="#6a6668"/></svg>
<div class="a" style="left:656px;top:4px;width:20px;height:24px;background:#201c20"></div>
<svg class="a" style="left:655px;top:4px" width="22" height="24" viewBox="0 0 22 24"><g fill="none" stroke="#e0d8d0" stroke-width="1.2" stroke-linejoin="round"><path d="M11.4 1.4L13.8 0.7 18.9 4.9 18.1 6.2 14.3 8.6 13.8 15.4 12.8 16.4 3.2 9.4 4.3 8.1 8.7 7.2Z"/><path d="M7 15.2L2.7 21.5" stroke-width="1.5"/></g></svg>
<div class="cb" style="left:681px;top:5px;width:152px;height:22px"></div>
<svg class="a" style="left:686px;top:11px" width="12" height="11"><g stroke="#40a050" stroke-width="1.6"><path d="M1 2l5-1 5 1M1 4.5l5-1 5 1M1 7l5-1 5 1M1 9.5l5-1 5 1"/></g></svg>
<div class="t" style="left:702.00px;top:10.00px;font-size:13px;color:#f0ecee;font-weight:normal;transform:scaleX(0.8723);transform-origin:0 0;">Show</div>
<div class="sp" style="left:813px;top:6px;width:19px;height:20px"></div><svg class="a" style="left:813px;top:6px" width="19" height="20"><path d="M6.0 8.8l3.5-4.3 3.5 4.3z M6.0 11.2l3.5 4.3 3.5-4.3z" fill="#3e3c3c"/></svg>
<svg class="a" style="left:839px;top:11px" width="19" height="16"><path d="M1 6l6-5v3h8v4H7v3z" fill="#f0f0f0"/><rect x="0" y="13" width="18" height="2" fill="#4a4446"/></svg>
<svg class="a" style="left:865px;top:11px" width="19" height="16"><path d="M17 6l-6-5v3H3v4h8v3z" fill="#6e6468"/><rect x="0" y="13" width="18" height="2" fill="#4a4446"/></svg>
<svg class="a" style="left:892px;top:7px" width="19" height="20"><path d="M9 0l6 7h-4v6H7V7H3z" fill="#f4f4f4"/><rect x="0" y="17" width="18" height="2" fill="#4a4446"/></svg>
<svg class="a" style="left:919px;top:7px" width="18" height="18"><path d="M9 2H2v14h14V9" fill="none" stroke="#6e6468" stroke-width="1.8"/><path d="M6 12L15 3M6 7v5h5" fill="none" stroke="#6e6468" stroke-width="1.8"/></svg>
<svg class="a" style="left:994px;top:8px" width="15" height="15"><path d="M5 1h5v4h4v5h-4v4H5v-4H1V5h4z" fill="#a8d070" stroke="#d0f0a0" stroke-width=".6"/></svg>
<div class="cb" style="left:1014px;top:7px;width:220px;height:18px;background:#181418"></div>
<div class="t" style="left:1017.60px;top:9.74px;font-size:12px;color:#625c5e;font-weight:normal;transform:scaleX(1.0024);transform-origin:0 0;">Instantiate new Element (ctrl + spacebar)</div>
<svg class="a" style="left:610px;top:39px" width="12" height="11"><path d="M0 5.5L5.5 0V3H11v5H5.5v3z" fill="#d8d4d4"/></svg>
<div class="a" style="left:627px;top:40px;width:1px;height:10px;background:#4a4648"></div>
<div class="t" style="left:637.80px;top:37.02px;font-size:12.5px;color:#f4f0f2;font-weight:bold;transform:scaleX(0.9006);transform-origin:0 0;">Elements</div>
<div class="a" style="left:845px;top:40px;width:1px;height:10px;background:#4a4648"></div>
<div class="a" style="left:867px;top:40px;width:1px;height:10px;background:#4a4648"></div>
<div class="a" style="left:889px;top:40px;width:1px;height:10px;background:#4a4648"></div>
<div class="a" style="left:911px;top:40px;width:1px;height:10px;background:#4a4648"></div>
<div class="a" style="left:933px;top:40px;width:1px;height:10px;background:#4a4648"></div>
<div class="a" style="left:955px;top:40px;width:1px;height:10px;background:#4a4648"></div>
<svg class="a" style="left:849px;top:39px" width="13" height="11"><path d="M1 6l3.5 3.5L12 2" fill="none" stroke="#f0f0f0" stroke-width="2.4"/></svg>
<svg class="a" style="left:871px;top:40px" width="13" height="9"><path d="M0.5 4.5Q6.5 -1.5 12.5 4.5Q6.5 10.5 0.5 4.5z" fill="#8a8486"/><circle cx="6.5" cy="4.5" r="2" fill="#2a2829"/></svg>
<div class="t" style="left:895.00px;top:38.00px;font-size:12.5px;color:#c8c4c6;font-weight:normal;">S</div>
<svg class="a" style="left:914px;top:37px" width="14" height="15"><defs><linearGradient id="tg" x1="0" y1="1" x2="1" y2="0"><stop offset="0" stop-color="#20c060"/><stop offset=".35" stop-color="#d0e020"/><stop offset=".65" stop-color="#e04040"/><stop offset="1" stop-color="#c040c0"/></linearGradient></defs><path d="M1 9L8 1h5v5l-8 8z" fill="url(#tg)"/><circle cx="10.5" cy="3.5" r="1" fill="#222"/></svg>
<svg class="a" style="left:937px;top:38px" width="12" height="13"><path d="M3 6V4a3 3 0 0 1 6 0v2" fill="none" stroke="#c8c4c6" stroke-width="1.6"/><rect x="1.5" y="6" width="9" height="6.5" fill="#c8c4c6"/></svg>
<div class="t" style="left:965.30px;top:37.02px;font-size:12.5px;color:#f4f0f2;font-weight:bold;transform:scaleX(0.9294);transform-origin:0 0;">Value</div>
<div class="a" style="left:1190px;top:40px;width:1px;height:10px;background:#4a4648"></div>
<svg class="a" style="left:1193px;top:37px" width="20" height="15"><rect x="4" y="2" width="11" height="11" fill="#5a6a58" stroke="#808a78" stroke-width=".6"/><path d="M0 8h5l1.5-3 2 6 2-9 1.5 7 1-2h6" fill="none" stroke="#f0f0f0" stroke-width="1"/></svg>
<div class="a" style="left:637.5px;top:57px;width:2px;height:133px;background:#2a282a"></div>
<div class="a" style="left:647.5px;top:80px;width:2px;height:110px;background:#2a282a"></div>
<div class="a" style="left:605px;top:107px;width:610px;height:23px;background:rgba(46,54,86,0.93);border-top:1px solid #46507a;border-bottom:1px solid #46507a"></div>
<div class="a" style="left:1211px;top:107px;width:4px;height:23px;background:#5462a8"></div>
<svg class="a" style="left:606px;top:63px" width="17" height="17"><path d="M1 8.5L9 1v4h7v7H9v4z" fill="#58c890"/></svg>
<svg class="a" style="left:634px;top:70px" width="9" height="6"><path d="M1 1l3.5 3.5L8 1" fill="none" stroke="#b8b4b6" stroke-width="1.3"/></svg>
<svg class="a" style="left:651px;top:63px" width="23" height="19"><g fill="#3a8a48" stroke="#70c070" stroke-width=".6"><path d="M1 4l10-3 11 3-10 3z"/><path d="M1 8l10-3 11 3-10 3z"/><path d="M1 12l10-3 11 3-10 3z"/></g></svg>
<div class="t" style="left:686.20px;top:66.20px;font-size:13px;color:#f0ecee;font-weight:normal;transform:scaleX(0.9628);transform-origin:0 0;">Show</div>
<svg class="a" style="left:644px;top:93px" width="9" height="6"><path d="M1 1l3.5 3.5L8 1" fill="none" stroke="#b8b4b6" stroke-width="1.3"/></svg>
<svg class="a" style="left:663px;top:85px" width="19" height="17"><path d="M9.5 1L18 5H1z" fill="#d8a0e0"/><path d="M3 6v7M7 6v7M11 6v7M15 6v7" stroke="#d8a0e0" stroke-width="2"/><rect x="1" y="14" width="17" height="2" fill="#d8a0e0"/></svg>
<div class="t" style="left:695.66px;top:89.20px;font-size:13px;color:#d8a0e0;font-weight:normal;transform:scaleX(0.9414);transform-origin:0 0;">Links</div>
<svg class="a" style="left:654px;top:116px" width="9" height="6"><path d="M1 1l3.5 3.5L8 1" fill="none" stroke="#b8b4b6" stroke-width="1.3"/></svg>
<svg class="a" style="left:675px;top:109px" width="16" height="17"><path d="M3 1h11v12a2 2 0 0 1-2 2H2a2 2 0 0 0 2-2z" fill="#e8e4e0"/><path d="M1 13h3v2H2z" fill="#c0bcb8"/></svg>
<div class="t" style="left:706.10px;top:112.20px;font-size:13px;color:#e0a4ec;font-weight:normal;transform:scaleX(1.0157);transform-origin:0 0;">Audio Spectrum</div>
<svg class="a" style="left:684px;top:132px" width="19" height="19"><circle cx="9.5" cy="9.5" r="7.5" fill="none" stroke="#e85010" stroke-width="1.8" stroke-dasharray="2.5 1.2"/><circle cx="9.5" cy="9.5" r="4.3" fill="#5a1010" stroke="#e02818" stroke-width="1.4"/><path d="M9.5 3v13M3 9.5h13" stroke="#e03020" stroke-width="1.2"/></svg>
<div class="t" style="left:716.20px;top:135.20px;font-size:13px;color:#e4909a;font-weight:normal;transform:scaleX(0.9927);transform-origin:0 0;">Content Test Patter...</div>
<svg class="a" style="left:606px;top:156px" width="12" height="16"><path d="M11 0v16L1 8z" fill="#343234"/></svg>
<svg class="a" style="left:644px;top:162px" width="9" height="6"><path d="M1 1l3.5 3.5L8 1" fill="none" stroke="#b8b4b6" stroke-width="1.3"/></svg>
<svg class="a" style="left:662px;top:153px" width="23" height="22"><rect x="1" y="1" width="16" height="16" fill="#3c4a80" stroke="#7888c8" stroke-width="1"/><rect x="5" y="5" width="16" height="16" fill="#46549a" stroke="#8898d8" stroke-width="1"/></svg>
<div class="t" style="left:696.30px;top:158.20px;font-size:13px;color:#aab8ec;font-weight:normal;transform:scaleX(0.9830);transform-origin:0 0;">Audio_Reaction</div>
<svg class="a" style="left:670px;top:175px" width="25" height="20"><path d="M2.5 1v8h6" fill="none" stroke="#6a90e0" stroke-width="1"/><path d="M6.5 7l2.5 2-2.5 2" fill="none" stroke="#6a90e0" stroke-width="1"/><rect x="9.5" y="2.5" width="14" height="13" fill="#1a1619" stroke="#e8a0a8" stroke-width="1"/><path d="M11.5 5h6" stroke="#d090e0" stroke-width="1.6"/><path d="M13 8h6" stroke="#a0a8c0" stroke-width="1.6"/><path d="M15 11h6" stroke="#90d080" stroke-width="1.6"/><path d="M11.5 13v2M14 13v2M16.5 13v2M19 13v2M21.5 13v2" stroke="#e8a0a8" stroke-width=".8"/></svg>
<div class="t" style="left:705.37px;top:181.20px;font-size:13px;color:#e8aaa2;font-weight:normal;transform:scaleX(1.0303);transform-origin:0 0;">Main Timeline</div>
<svg class="a" style="left:606px;top:202px" width="12" height="16"><path d="M11 0v16L1 8z" fill="#343234"/></svg>
<svg class="a" style="left:674px;top:201px" width="19" height="19"><rect x=".5" y=".5" width="18" height="18" fill="#3a4a90" stroke="#90a8e8" stroke-width="1"/><circle cx="9.5" cy="9.5" r="6" fill="none" stroke="#a0b8f0" stroke-width="1"/><path d="M1 1l17 17M18 1L1 18" stroke="#a0b8f0" stroke-width="1"/><rect x="5" y="5" width="9" height="9" fill="none" stroke="#a0b8f0" stroke-width=".8"/></svg>
<div class="t" style="left:706.00px;top:204.20px;font-size:13px;color:#b4c4f4;font-weight:normal;transform:scaleX(0.9976);transform-origin:0 0;">Content Test Pattern</div>
<div class="a" style="left:916px;top:66px;width:12px;height:12px;background:#000;border:1px solid #3a3839"></div>
<div class="a" style="left:935px;top:63px;width:17px;height:18px;background:#242224"></div>
<div class="a" style="left:1198px;top:67px;width:11px;height:11px;border:1px solid #383638"></div>
<svg class="a" style="left:869px;top:89px" width="19" height="12"><path d="M1 6Q9.5 -2.5 18 6Q9.5 14.5 1 6z" fill="#f4f0f0" stroke="#000" stroke-width="1.2"/><circle cx="9.5" cy="6" r="3.6" fill="#2a2829"/></svg>
<svg class="a" style="left:893px;top:88px" width="14" height="14"><circle cx="7" cy="7" r="5.6" fill="#000" stroke="#5a5658" stroke-width="1"/></svg>
<div class="a" style="left:916px;top:89px;width:12px;height:12px;background:#000;border:1px solid #3a3839"></div>
<div class="a" style="left:935px;top:86px;width:17px;height:18px;background:#242224"></div>
<div class="a" style="left:1198px;top:90px;width:11px;height:11px;border:1px solid #383638"></div>
<svg class="a" style="left:869px;top:112px" width="19" height="12"><path d="M1 6Q9.5 -2.5 18 6Q9.5 14.5 1 6z" fill="#f4f0f0" stroke="#000" stroke-width="1.2"/><circle cx="9.5" cy="6" r="3.6" fill="#2a2829"/></svg>
<svg class="a" style="left:893px;top:111px" width="14" height="14"><circle cx="7" cy="7" r="5.6" fill="#000" stroke="#5a5040" stroke-width="1"/></svg>
<div class="a" style="left:916px;top:112px;width:12px;height:12px;background:#000;border:1px solid #3a3839"></div>
<div class="a" style="left:935px;top:109px;width:17px;height:8px;background:#4a5070"></div><div class="a" style="left:935px;top:124px;width:17px;height:4px;background:#4a5070"></div>
<div class="a" style="left:1198px;top:113px;width:11px;height:11px;background:#5ea858;border:1px solid #74ec84"></div>
<svg class="a" style="left:869px;top:135px" width="19" height="12"><path d="M1 6Q9.5 -2.5 18 6Q9.5 14.5 1 6z" fill="#f4f0f0" stroke="#000" stroke-width="1.2"/><circle cx="9.5" cy="6" r="3.6" fill="#2a2829"/></svg>
<svg class="a" style="left:893px;top:134px" width="14" height="14"><circle cx="7" cy="7" r="5.6" fill="#000" stroke="#5a5658" stroke-width="1"/></svg>
<div class="a" style="left:916px;top:135px;width:12px;height:12px;background:#000;border:1px solid #3a3839"></div>
<div class="a" style="left:935px;top:132px;width:17px;height:18px;background:#242224"></div>
<div class="a" style="left:1198px;top:136px;width:11px;height:11px;border:1px solid #383638"></div>
<svg class="a" style="left:869px;top:158px" width="19" height="12"><path d="M1 6Q9.5 -2.5 18 6Q9.5 14.5 1 6z" fill="#f4f0f0" stroke="#000" stroke-width="1.2"/><circle cx="9.5" cy="6" r="3.6" fill="#2a2829"/></svg>
<svg class="a" style="left:893px;top:157px" width="14" height="14"><circle cx="7" cy="7" r="5.6" fill="#000" stroke="#5a5658" stroke-width="1"/></svg>
<div class="a" style="left:916px;top:158px;width:12px;height:12px;background:#000;border:1px solid #3a3839"></div>
<div class="a" style="left:935px;top:155px;width:17px;height:18px;background:#242224"></div>
<div class="a" style="left:1198px;top:159px;width:11px;height:11px;border:1px solid #383638"></div>
<div class="a" style="left:916px;top:181px;width:12px;height:12px;background:#000;border:1px solid #3a3839"></div>
<div class="a" style="left:935px;top:178px;width:17px;height:18px;background:#242224"></div>
<div class="a" style="left:1198px;top:182px;width:11px;height:11px;border:1px solid #383638"></div>
<svg class="a" style="left:869px;top:204px" width="19" height="12"><path d="M1 6Q9.5 -2.5 18 6Q9.5 14.5 1 6z" fill="#f4f0f0" stroke="#000" stroke-width="1.2"/><circle cx="9.5" cy="6" r="3.6" fill="#2a2829"/></svg>
<svg class="a" style="left:893px;top:203px" width="14" height="14"><circle cx="7" cy="7" r="5.6" fill="#000" stroke="#5a5658" stroke-width="1"/></svg>
<div class="a" style="left:916px;top:204px;width:12px;height:12px;background:#000;border:1px solid #3a3839"></div>
<div class="a" style="left:935px;top:201px;width:17px;height:18px;background:#242224"></div>
<div class="a" style="left:1198px;top:205px;width:11px;height:11px;background:#5ea858;border:1px solid #74ec84"></div>
<div class="a" style="left:958px;top:63px;width:114px;height:18px;background:#2c2a2c"></div>
<div class="t" style="left:962.70px;top:66.20px;font-size:13px;color:#8a8486;font-weight:normal;transform:scaleX(0.9264);transform-origin:0 0;">100.0 %</div>
<div class="cb" style="left:1075px;top:62px;width:117px;height:21px"></div><svg class="a" style="left:1081px;top:67px" width="11" height="11"><defs><linearGradient id="rb108167" x1="0" x2="1"><stop offset="0" stop-color="#f03030"/><stop offset=".3" stop-color="#f0e020"/><stop offset=".55" stop-color="#30e060"/><stop offset=".8" stop-color="#3080f0"/><stop offset="1" stop-color="#c040e0"/></linearGradient></defs><rect x="0.5" y="0.5" width="9" height="2" fill="url(#rb108167)"/><rect x="0.5" y="4" width="9" height="1.6" fill="#e8e8e8"/><rect x="0.5" y="7.6" width="9" height="1.6" fill="#8a8a8a"/></svg><div class="t" style="left:1095.32px;top:66.00px;font-size:13px;color:#f0ecee;font-weight:normal;transform:scaleX(0.8820);transform-origin:0 0;">Pass Through</div><div class="sp" style="left:1175px;top:62px;width:17px;height:21px"></div><svg class="a" style="left:1175px;top:62px" width="17" height="21"><path d="M5.0 9.3l3.5-4.3 3.5 4.3z M5.0 11.7l3.5 4.3 3.5-4.3z" fill="#3e3c3c"/></svg>
<div class="cb" style="left:957px;top:131px;width:235px;height:20px"></div>
<svg class="a" style="left:962px;top:137px" width="10" height="8"><path d="M0 2h8v2H0z" fill="#e0e0e0"/><path d="M0 4h6" stroke="#888" stroke-width="1.5"/></svg>
<div class="t" style="left:976.60px;top:135.00px;font-size:13px;color:#f0ecee;font-weight:normal;transform:scaleX(0.8580);transform-origin:0 0;">Size</div>
<div class="a" style="left:958px;top:155px;width:114px;height:18px;background:#2c2a2c"></div><div class="t" style="left:962.50px;top:157.90px;font-size:13px;color:#e8e4e6;font-weight:normal;transform:scaleX(0.9264);transform-origin:0 0;">100.0 %</div><svg class="a" style="left:1058px;top:156px" width="12" height="16"><path d="M2 7l4-5 4 5zM2 9l4 5 4-5z" fill="#4a4648"/></svg>
<div class="cb" style="left:1075px;top:154px;width:117px;height:21px"></div><div class="a" style="left:1081px;top:159px;width:10px;height:10px;background:#7a3f8a;border:1px solid #c890d8"></div><div class="t" style="left:1096.20px;top:157.90px;font-size:13px;color:#f0ecee;font-weight:normal;transform:scaleX(0.9380);transform-origin:0 0;">Content Map</div><div class="sp" style="left:1175px;top:154px;width:17px;height:21px"></div><svg class="a" style="left:1175px;top:154px" width="17" height="21"><path d="M5.0 9.3l3.5-4.3 3.5 4.3z M5.0 11.7l3.5 4.3 3.5-4.3z" fill="#3e3c3c"/></svg>
<div class="t" style="left:961.90px;top:180.40px;font-size:13px;color:#e8e4e6;font-weight:normal;transform:scaleX(0.9439);transform-origin:0 0;">00...</div>
<div class="a" style="left:997px;top:177px;width:22px;height:20px;background:#2c2a2c;border-radius:1px"></div>
<svg class="a" style="left:1000px;top:179px" width="16" height="16"><path d="M3 3v10M13 3L5 8l8 5z" stroke="#e8e8e8" fill="#e8e8e8" stroke-width="2"/></svg>
<div class="a" style="left:1021px;top:177px;width:22px;height:20px;background:#2c2a2c;border-radius:1px"></div>
<svg class="a" style="left:1024px;top:179px" width="16" height="16"><path d="M5 3v10M11 3v10" stroke="#e8e8e8" stroke-width="3"/></svg>
<div class="a" style="left:1045px;top:177px;width:22px;height:20px;background:#2c2a2c;border-radius:1px"></div>
<svg class="a" style="left:1048px;top:179px" width="16" height="16"><path d="M4 2l10 6-10 6z" fill="#f0f0f0"/></svg>
<div class="a" style="left:1069px;top:177px;width:22px;height:20px;background:#2c2a2c;border-radius:1px"></div>
<svg class="a" style="left:1072px;top:179px" width="16" height="16"><path d="M13 3v10M3 3l8 5-8 5z" stroke="#e8e8e8" fill="#e8e8e8" stroke-width="2"/></svg>
<div class="a" style="left:1091px;top:177px;width:22px;height:20px;background:#2c2a2c;border-radius:1px"></div>
<svg class="a" style="left:1094px;top:179px" width="16" height="16"><path d="M2 9h10l-2-3h2l3 4H2z" fill="#e8e8e8"/></svg>
<div class="t" style="left:1120.00px;top:188.29px;font-size:11px;color:#8a8486;font-weight:normal;transform:scaleX(1.0000);transform-origin:0 0;">x</div>
<div class="t" style="left:1130.60px;top:180.40px;font-size:13px;color:#e8e4e6;font-weight:normal;transform:scaleX(0.9192);transform-origin:0 0;">1.0</div>
<svg class="a" style="left:1155px;top:179px" width="12" height="16"><path d="M2 7l4-5 4 5zM2 9l4 5 4-5z" fill="#4a4648"/></svg>
<div class="a" style="left:1170px;top:178px;width:21px;height:19px;background:#242224"></div>
<svg class="a" style="left:1175px;top:181px" width="12" height="12"><path d="M0.5 6h10M6 1.5l4.5 4.5L6 10.5" fill="none" stroke="#e8e4e6" stroke-width="1.2"/></svg>
<div class="a" style="left:958px;top:201px;width:114px;height:18px;background:#2c2a2c"></div><div class="t" style="left:962.50px;top:203.60px;font-size:13px;color:#e8e4e6;font-weight:normal;transform:scaleX(0.9264);transform-origin:0 0;">100.0 %</div><svg class="a" style="left:1058px;top:202px" width="12" height="16"><path d="M2 7l4-5 4 5zM2 9l4 5 4-5z" fill="#4a4648"/></svg>
<div class="cb" style="left:1075px;top:200px;width:117px;height:21px"></div><svg class="a" style="left:1081px;top:205px" width="11" height="11"><defs><linearGradient id="rb1081205" x1="0" x2="1"><stop offset="0" stop-color="#f03030"/><stop offset=".3" stop-color="#f0e020"/><stop offset=".55" stop-color="#30e060"/><stop offset=".8" stop-color="#3080f0"/><stop offset="1" stop-color="#c040e0"/></linearGradient></defs><rect x="0.5" y="0.5" width="9" height="2" fill="url(#rb1081205)"/><rect x="0.5" y="4" width="9" height="1.6" fill="#e8e8e8"/><rect x="0.5" y="7.6" width="9" height="1.6" fill="#8a8a8a"/></svg><div class="t" style="left:1095.25px;top:203.60px;font-size:13px;color:#f0ecee;font-weight:normal;transform:scaleX(0.9486);transform-origin:0 0;">Normal</div><div class="sp" style="left:1175px;top:200px;width:17px;height:21px"></div><svg class="a" style="left:1175px;top:200px" width="17" height="21"><path d="M5.0 9.3l3.5-4.3 3.5 4.3z M5.0 11.7l3.5 4.3 3.5-4.3z" fill="#3e3c3c"/></svg>
<svg class="a" style="left:844px;top:171px" width="14" height="20"><path d="M1 1v15l4-4 3 6 2-1-3-6h5z" fill="#fff" stroke="#000" stroke-width="1"/></svg>
<svg class="a" style="left:612px;top:292px" width="17" height="17"><circle cx="7" cy="7" r="5.5" fill="#d8e8f0" stroke="#f0f0f0" stroke-width="1.5"/><path d="M11 11l4 4" stroke="#a0a0a0" stroke-width="2"/></svg>
<div class="cb" style="left:632px;top:293px;width:579px;height:17px;background:#181418"></div>
<div class="t" style="left:636.00px;top:295.84px;font-size:12px;color:#5e585a;font-weight:normal;transform:scaleX(0.9712);transform-origin:0 0;">Search in Scene (ctrl+f)</div>
<div class="pn" style="left:605px;top:323px;width:614px;height:513px"></div>
<svg class="a" style="left:620px;top:330px" width="18" height="20"><g stroke="#e8e4e0" stroke-width="1.3" fill="none"><path d="M1 4h16M1 10h16M1 16h16"/></g><g fill="#1a1619" stroke="#e8e4e0" stroke-width="1.2"><circle cx="8" cy="4" r="2.3"/><circle cx="12" cy="10" r="2.3"/><circle cx="7" cy="16" r="2.3"/></g></svg>
<svg class="a" style="left:641px;top:338px" width="7" height="5"><path d="M0 0h6l-3 4z" fill="#6a6668"/></svg>
<svg class="a" style="left:656px;top:329px" width="22" height="24" viewBox="0 0 22 24"><g fill="none" stroke="#e0d8d0" stroke-width="1.2" stroke-linejoin="round"><path d="M11.4 1.4L13.8 0.7 18.9 4.9 18.1 6.2 14.3 8.6 13.8 15.4 12.8 16.4 3.2 9.4 4.3 8.1 8.7 7.2Z"/><path d="M7 15.2L2.7 21.5" stroke-width="1.5"/></g></svg>
<div class="cb" style="left:681px;top:328px;width:150px;height:22px"></div>
<svg class="a" style="left:686px;top:333px" width="11" height="12"><path d="M2 1h8v8a1.5 1.5 0 0 1-1.5 1.5H1a1.5 1.5 0 0 0 1.5-1.5z" fill="#e8e4e0"/></svg>
<div class="t" style="left:701.20px;top:332.60px;font-size:13px;color:#f0ecee;font-weight:normal;transform:scaleX(0.9240);transform-origin:0 0;">Audio Spectrum</div>
<svg class="a" style="left:839px;top:333px" width="19" height="16"><path d="M1 6l6-5v3h8v4H7v3z" fill="#f0f0f0"/><rect x="0" y="13" width="18" height="2" fill="#4a4446"/></svg>
<svg class="a" style="left:865px;top:333px" width="19" height="16"><path d="M17 6l-6-5v3H3v4h8v3z" fill="#6e6468"/><rect x="0" y="13" width="18" height="2" fill="#4a4446"/></svg>
<div class="a" style="left:1185px;top:328px;width:22px;height:22px;background:#000;border:1px solid #3a3839;border-radius:1px"></div><svg class="a" style="left:1185px;top:328px" width="22" height="22"><rect x="3" y="3" width="16" height="2.5" fill="#4e4c4e"/><rect x="3" y="8" width="11" height="5.5" fill="#4e4c4e"/><rect x="15.5" y="8" width="3" height="5.5" fill="#4e4c4e"/><rect x="3" y="16" width="16" height="2.5" fill="#4e4c4e"/></svg>
<div class="t" style="left:1117.30px;top:366.57px;font-size:11.5px;color:#8a8480;font-weight:bold;transform:scaleX(0.9608);transform-origin:0 0;">ADVANCED</div>
<div class="a" style="left:1187px;top:364.8px;width:19px;height:14.5px;background:#2a2829;border:1px solid #c8c0b0"></div>
<div class="a" style="left:1188px;top:365.8px;width:8.5px;height:12.5px;background:#a8a8a8"></div>
<div class="t" style="left:623.10px;top:380.57px;font-size:13.5px;color:#eeeaec;font-weight:normal;transform:scaleX(1.0098);transform-origin:0 0;">General</div>
<div class="t" style="left:668.30px;top:406.60px;font-size:13px;color:#e8e4e6;font-weight:normal;transform:scaleX(0.9623);transform-origin:0 0;">Type</div>
<div class="t" style="left:668.30px;top:429.60px;font-size:13px;color:#8a8486;font-weight:normal;transform:scaleX(1.0256);transform-origin:0 0;">Output Value</div>
<div class="t" style="left:668.30px;top:452.60px;font-size:13px;color:#e8e4e6;font-weight:normal;transform:scaleX(1.0101);transform-origin:0 0;">Output Channel</div>
<div class="t" style="left:668.30px;top:476.00px;font-size:13px;color:#e8e4e6;font-weight:normal;transform:scaleX(0.9724);transform-origin:0 0;">Channel</div>
<div class="t" style="left:667.23px;top:498.80px;font-size:13px;color:#e8e4e6;font-weight:normal;transform:scaleX(1.0705);transform-origin:0 0;">Method</div>
<div class="t" style="left:667.30px;top:521.60px;font-size:13px;color:#e8e4e6;font-weight:normal;transform:scaleX(0.9978);transform-origin:0 0;">Exponent</div>
<svg class="a" style="left:636px;top:404px" width="18" height="18"><path d="M1 5V1h4M13 1h4v4M17 13v4h-4M5 17H1v-4" fill="none" stroke="#d8d0d0" stroke-width="1.2"/></svg>
<svg class="a" style="left:636px;top:427px" width="18" height="18"><rect x="0.5" y="0.5" width="17" height="17" fill="#98a898" stroke="#c8d0c0"/><circle cx="9" cy="9" r="7" fill="#5a5456"/><text x="9" y="12.5" font-size="9.5" font-family="Liberation Sans" font-weight="bold" fill="#f0f0f0" text-anchor="middle">%</text></svg>
<svg class="a" style="left:636px;top:450px" width="18" height="18"><circle cx="9" cy="9" r="8.2" fill="#000"/><circle cx="9" cy="9" r="7.2" fill="#6a6668" stroke="#d8d4d0" stroke-width="1"/><circle cx="9" cy="9" r="2.6" fill="#e0e0e0"/><circle cx="9" cy="9" r="1.4" fill="#222"/></svg>
<svg class="a" style="left:636px;top:473px" width="18" height="18"><rect x="0.5" y="0.5" width="17" height="17" fill="#98a898" stroke="#c8d0c0"/><path d="M6 1.5h6l4.5 4.5v6L12 16.5H6L1.5 12V6z" fill="#5a5456"/><path d="M9 6.5v5" stroke="#e0e0e0" stroke-width="1"/></svg>
<svg class="a" style="left:636px;top:496px" width="18" height="18"><rect x="0.5" y="0.5" width="17" height="17" fill="#2a2829" stroke="#b8b4b0"/><rect x="6.5" y="3.5" width="8" height="11" fill="#5a5858" stroke="#d8d4d0"/><path d="M6.5 7.2h8M6.5 10.8h8" stroke="#d8d4d0"/><rect x="2.5" y="2.5" width="2" height="2" fill="#f0f0f0"/></svg>
<svg class="a" style="left:636px;top:519px" width="18" height="18"><rect x="0.5" y="0.5" width="17" height="17" fill="#98a898" stroke="#c8d0c0"/><path d="M6 1.5h6l4.5 4.5v6L12 16.5H6L1.5 12V6z" fill="#5a5456"/><rect x="8" y="8" width="2" height="2" fill="#e0e0e0"/></svg>
<div class="cb" style="left:873px;top:402px;width:319px;height:22px"></div>
<svg class="a" style="left:878px;top:407px" width="11" height="12"><path d="M2 1h8v8a1.5 1.5 0 0 1-1.5 1.5H1a1.5 1.5 0 0 0 1.5-1.5z" fill="#e8e4e0"/></svg>
<div class="t" style="left:894.40px;top:406.50px;font-size:13px;color:#f0ecee;font-weight:normal;transform:scaleX(0.9230);transform-origin:0 0;">Audio Spectrum</div>
<div class="sp" style="left:1174px;top:403px;width:18px;height:21px"></div><svg class="a" style="left:1174px;top:403px" width="18" height="21"><path d="M5.5 9.3l3.5-4.3 3.5 4.3z M5.5 11.7l3.5 4.3 3.5-4.3z" fill="#3e3c3c"/></svg>
<div class="a" style="left:1195px;top:402px;width:19px;height:22px;background:#2a2829;border-radius:2px"></div>
<svg class="a" style="left:1199px;top:407px" width="11" height="12"><path d="M2 1h8v8a1.5 1.5 0 0 1-1.5 1.5H1a1.5 1.5 0 0 0 1.5-1.5z" fill="#e8e4e0"/></svg>
<div class="t" style="left:878.50px;top:429.80px;font-size:13px;color:#8a8486;font-weight:normal;transform:scaleX(0.9409);transform-origin:0 0;">26.991 %</div>
<div class="a" style="left:875px;top:449px;width:337px;height:19px;background:#2c2a2c;border-radius:2px"></div>
<div class="a" style="left:1039px;top:457px;width:8px;height:3px;background:#5a5658"></div>
<div class="t" style="left:878.80px;top:475.90px;font-size:13px;color:#f0ecee;font-weight:normal;transform:scaleX(0.9938);transform-origin:0 0;">1&nbsp;&nbsp;/ 2</div>
<svg class="a" style="left:1200px;top:473px" width="12" height="18"><path d="M2 7l4-5 4 5zM2 11l4 5 4-5z" fill="#4a4648"/></svg>
<div class="cb" style="left:873px;top:494px;width:341px;height:22px"></div>
<svg class="a" style="left:878px;top:499px" width="12" height="12"><rect x="0" y="0" width="11" height="11" fill="#e8e4e0"/><path d="M2 3h7M2 6h4M2 8h7" stroke="#888" stroke-width="1"/></svg>
<div class="t" style="left:893.46px;top:498.90px;font-size:13px;color:#f0ecee;font-weight:normal;transform:scaleX(0.9364);transform-origin:0 0;">Mean</div>
<div class="sp" style="left:1196px;top:495px;width:18px;height:21px"></div><svg class="a" style="left:1196px;top:495px" width="18" height="21"><path d="M5.5 9.3l3.5-4.3 3.5 4.3z M5.5 11.7l3.5 4.3 3.5-4.3z" fill="#3e3c3c"/></svg>
<div class="t" style="left:878.80px;top:521.30px;font-size:13px;color:#f0ecee;font-weight:normal;">1</div>
<svg class="a" style="left:1200px;top:519px" width="12" height="18"><path d="M2 7l4-5 4 5zM2 11l4 5 4-5z" fill="#4a4648"/></svg>
<div class="a" style="left:609px;top:540px;width:265px;height:142px;background:#2e3656;border:1px solid #46507a"></div>
<div class="a" style="left:833px;top:541px;width:13px;height:140px;background:#363e5c"></div>
<div class="a" style="left:838px;top:608px;width:4px;height:4px;background:#8a7a80;transform:rotate(45deg)"></div>
<svg class="a" style="left:616px;top:546px" width="7" height="10"><path d="M1.5 1l4 4-4 4" fill="none" stroke="#c8c4c6" stroke-width="1.3"/></svg>
<svg class="a" style="left:635px;top:542px" width="18" height="18"><rect x="0.5" y="0.5" width="17" height="17" fill="#2e3450" stroke="#a8b0a0"/><path d="M1.5 10.5h2.5l2-4 2 8.5 2-12 2 9 1.5-2.5h3" fill="none" stroke="#40d060" stroke-width="1.5"/></svg>
<div class="t" style="left:667.51px;top:544.20px;font-size:13px;color:#e8e4e6;font-weight:normal;transform:scaleX(0.9887);transform-origin:0 0;">Extractor</div>
<svg class="a" style="left:873px;top:540px" width="342" height="143"><rect x="0" y="0" width="342" height="143" fill="#222022"/><rect x="1" y="102" width="47.5" height="40" fill="#3e3c3e"/><line x1="1.80" y1="1" x2="1.80" y2="141" stroke="rgba(255,255,255,0.15)" stroke-width="1"/><line x1="34.83" y1="1" x2="34.83" y2="141" stroke="rgba(255,255,255,0.15)" stroke-width="1"/><line x1="67.86" y1="1" x2="67.86" y2="141" stroke="rgba(255,255,255,0.15)" stroke-width="1"/><line x1="100.89" y1="1" x2="100.89" y2="141" stroke="rgba(255,255,255,0.15)" stroke-width="1"/><line x1="133.92" y1="1" x2="133.92" y2="141" stroke="rgba(255,255,255,0.15)" stroke-width="1"/><line x1="166.95" y1="1" x2="166.95" y2="141" stroke="rgba(255,255,255,0.15)" stroke-width="1"/><line x1="199.98" y1="1" x2="199.98" y2="141" stroke="rgba(255,255,255,0.15)" stroke-width="1"/><line x1="233.01" y1="1" x2="233.01" y2="141" stroke="rgba(255,255,255,0.15)" stroke-width="1"/><line x1="266.04" y1="1" x2="266.04" y2="141" stroke="rgba(255,255,255,0.15)" stroke-width="1"/><line x1="299.07" y1="1" x2="299.07" y2="141" stroke="rgba(255,255,255,0.15)" stroke-width="1"/><line x1="332.10" y1="1" x2="332.10" y2="141" stroke="rgba(255,255,255,0.15)" stroke-width="1"/><line x1="1" y1="1.5" x2="341" y2="1.5" stroke="rgba(255,255,255,0.12)" stroke-width="1"/><line x1="1" y1="15.5" x2="341" y2="15.5" stroke="rgba(255,255,255,0.12)" stroke-width="1"/><line x1="1" y1="29.5" x2="341" y2="29.5" stroke="rgba(255,255,255,0.12)" stroke-width="1"/><line x1="1" y1="43.5" x2="341" y2="43.5" stroke="rgba(255,255,255,0.12)" stroke-width="1"/><line x1="1" y1="57.5" x2="341" y2="57.5" stroke="rgba(255,255,255,0.12)" stroke-width="1"/><line x1="1" y1="71.5" x2="341" y2="71.5" stroke="rgba(255,255,255,0.12)" stroke-width="1"/><line x1="1" y1="85.5" x2="341" y2="85.5" stroke="rgba(255,255,255,0.12)" stroke-width="1"/><line x1="1" y1="99.5" x2="341" y2="99.5" stroke="rgba(255,255,255,0.12)" stroke-width="1"/><line x1="1" y1="113.5" x2="341" y2="113.5" stroke="rgba(255,255,255,0.12)" stroke-width="1"/><line x1="1" y1="127.5" x2="341" y2="127.5" stroke="rgba(255,255,255,0.12)" stroke-width="1"/><line x1="1" y1="141.5" x2="341" y2="141.5" stroke="rgba(255,255,255,0.12)" stroke-width="1"/><line x1="48.5" y1="0" x2="48.5" y2="142" stroke="#20b080" stroke-width="1"/><line x1="0" y1="102.5" x2="341" y2="102.5" stroke="#20b080" stroke-width="1"/><line x1="1" y1="140.5" x2="341" y2="140.5" stroke="#a09a90" stroke-width="1"/><line x1="340.5" y1="0" x2="340.5" y2="142" stroke="#4a6aa0" stroke-width="1"/><path d="M2.2 135 L2.8 112 L4 118 L5.5 129 L6.5 131 L7.5 123 L8.5 124 L10 132 L12 135 L15 137 L19 138.5 L23 139 L26 138.3 L28 139.5 L35 140 L48 140.3" fill="none" stroke="#fff" stroke-width="1.6" stroke-linejoin="round"/><rect x="329.5" y="14.5" width="9.5" height="3.5" fill="none" stroke="#101010" stroke-width="1.2"/></svg>
<svg class="a" style="left:6px;top:546px" width="240" height="27"><path d="M112 26L117 4Q118 1.5 121 1.5H214Q217 1.5 218 4L225 26z" fill="#1e1a1e"/><path d="M0.5 26L7 4Q8 1.5 11 1.5H106Q109 1.5 110 4L114.5 26z" fill="#1c2236"/></svg>
<svg class="a" style="left:19.5px;top:552.5px" width="15" height="15"><g fill="#f0f0f0"><circle cx="7.5" cy="7.5" r="5.2"/><rect x="6.2" y="0.3" width="2.6" height="3.5" transform="rotate(0 7.5 7.5)"/><rect x="6.2" y="0.3" width="2.6" height="3.5" transform="rotate(45 7.5 7.5)"/><rect x="6.2" y="0.3" width="2.6" height="3.5" transform="rotate(90 7.5 7.5)"/><rect x="6.2" y="0.3" width="2.6" height="3.5" transform="rotate(135 7.5 7.5)"/><rect x="6.2" y="0.3" width="2.6" height="3.5" transform="rotate(180 7.5 7.5)"/><rect x="6.2" y="0.3" width="2.6" height="3.5" transform="rotate(225 7.5 7.5)"/><rect x="6.2" y="0.3" width="2.6" height="3.5" transform="rotate(270 7.5 7.5)"/><rect x="6.2" y="0.3" width="2.6" height="3.5" transform="rotate(315 7.5 7.5)"/></g><circle cx="7.5" cy="7.5" r="2.3" fill="#1c2236"/></svg>
<svg class="a" style="left:43px;top:557px" width="7" height="5"><path d="M0 0h6l-3 4z" fill="#6a6668"/></svg>
<div class="t" style="left:59.93px;top:553.20px;font-size:13px;color:#f4f0f2;font-weight:normal;transform:scaleX(0.9664);transform-origin:0 0;">Devices</div>
<svg class="a" style="left:127px;top:550px" width="18" height="18"><rect x=".5" y=".5" width="17" height="17" fill="#281c24" stroke="#e0a0a8"/><path d="M3 4h7" stroke="#c090e0" stroke-width="1.6"/><path d="M6 7.5h8" stroke="#e0a0a8" stroke-width="1.6"/><path d="M7 11h8" stroke="#80c080" stroke-width="1.6"/><path d="M2 15h14" stroke="#e0a0a8" stroke-width="1"/></svg>
<svg class="a" style="left:148px;top:557px" width="7" height="5"><path d="M0 0h6l-3 4z" fill="#6a6668"/></svg>
<div class="t" style="left:167.00px;top:553.20px;font-size:13px;color:#b4aeb0;font-weight:normal;transform:scaleX(1.0142);transform-origin:0 0;">Timeline</div>
<div class="a" style="left:6px;top:571px;width:591px;height:265px;background:#1a1619;border:2px solid #161c30"></div>
<svg class="a" style="left:20px;top:578px" width="23" height="23"><rect x="0" y="0" width="22" height="22" rx="1.5" fill="#d0ccc8"/><path d="M5 3v16M11 3v16M17 3v16" stroke="#1a1619" stroke-width="1.5"/><path d="M3 8h4M9 13h4M15 9h4" stroke="#1a1619" stroke-width="2.5"/></svg>
<svg class="a" style="left:561px;top:578px" width="23" height="23"><rect x=".5" y=".5" width="21" height="21" fill="#101010" stroke="#4a4648"/><rect x="3" y="4" width="16" height="2" fill="#6a6668"/><rect x="3" y="8" width="11" height="5" fill="#6a6668"/><rect x="15" y="8" width="4" height="5" fill="#6a6668"/><rect x="3" y="15" width="16" height="2" fill="#6a6668"/></svg>
<div class="a" style="left:12px;top:607px;width:20px;height:24px;background:#9abb94"></div>
<div class="a" style="left:12px;top:641px;width:20px;height:189px;background:#9abb94"></div>
<div class="t" style="left:-6.4px;top:728.5px;width:60px;text-align:center;font-size:12.5px;color:#1e1e1e;transform:rotate(-90deg)">AUDIO</div>
<div class="a" style="left:35px;top:641px;width:538px;height:40px;background:#262426"></div>
<svg class="a" style="left:48px;top:645px" width="32" height="34"><g stroke="#c8c0b8" stroke-width="0.9"><path d="M2.8 10H6.5L12.3 5.5V23.5L6.5 18.8H2.8Z" fill="#000"/><path d="M15.5 7.8Q20.5 14.5 15.5 21.3L17 22.2Q22.8 14.5 17 6.8Z" fill="none"/><path d="M21 4.8Q27 14.5 21 24.5L22.8 25.3Q29.3 14.5 22.8 4Z" fill="none"/><rect x="2.5" y="26.5" width="24" height="3" rx="1.5" fill="#1e1c1e"/></g><path d="M7 28h6" stroke="#70a070" stroke-width="1.2"/></svg>
<div class="a" style="left:96px;top:656px;width:10px;height:10px;border:1px solid #3a3839;background:#1e1c1e"></div>
<div class="t" style="left:116.40px;top:647.10px;font-size:13px;color:#e8e4e6;font-weight:normal;transform:scaleX(1.0308);transform-origin:0 0;">Audio Input</div>
<div class="t" style="left:116.40px;top:663.84px;font-size:12px;color:#8a8486;font-weight:normal;transform:scaleX(0.9814);transform-origin:0 0;">DirectSound/Stereo Mix (2- Realtek(R) Audio)</div>
<div class="a" style="left:547px;top:645px;width:22px;height:32px;background:#2c2a2c;border:1px solid #363436;border-radius:2px"></div>
<svg class="a" style="left:549px;top:652px" width="18" height="18"><path d="M2 9h9" stroke="#fff" stroke-width="2.5"/><path d="M10 4l6 5-6 5z" fill="#fff"/><path d="M7 3v12" stroke="#fff" stroke-width="1"/></svg>
<div class="t" style="left:43.48px;top:689.70px;font-size:13px;color:#a8a2a4;font-weight:normal;transform:scaleX(1.0246);transform-origin:0 0;">Input Gain</div>
<div class="t" style="left:115.80px;top:689.70px;font-size:13px;color:#e8a070;font-weight:normal;transform:scaleX(0.9469);transform-origin:0 0;">15.0 dB</div>
<svg class="a" style="left:559px;top:689px" width="12" height="14"><path d="M2 6l4-5 4 5zM2 8l4 5 4-5z" fill="#5a5658"/></svg>
<div class="t" style="left:38.73px;top:710.30px;font-size:13px;color:#a8a2a4;font-weight:normal;transform:scaleX(0.9681);transform-origin:0 0;">Left</div>
<div class="t" style="left:38.69px;top:747.40px;font-size:13px;color:#a8a2a4;font-weight:normal;transform:scaleX(1.0055);transform-origin:0 0;">Right</div>
<div class="a" style="left:39.7px;top:731.8px;width:474.5px;height:7.4px;background:#050505"></div>
<div class="a" style="left:39.7px;top:731.8px;width:238.7px;height:7.4px;background:repeating-linear-gradient(90deg,#5aeca2 0 2.1px,#050505 2.1px 3px)"></div>
<div class="a" style="left:278.4px;top:731.8px;width:236px;height:7.4px;background:repeating-linear-gradient(90deg,#3a3839 0 2.1px,#050505 2.1px 3px)"></div>
<div class="a" style="left:39.7px;top:768.8px;width:474.5px;height:7.4px;background:#050505"></div>
<div class="a" style="left:39.7px;top:768.8px;width:238.7px;height:7.4px;background:repeating-linear-gradient(90deg,#5aeca2 0 2.1px,#050505 2.1px 3px)"></div>
<div class="a" style="left:278.4px;top:768.8px;width:236px;height:7.4px;background:repeating-linear-gradient(90deg,#3a3839 0 2.1px,#050505 2.1px 3px)"></div>
<div class="a" style="left:525px;top:704px;width:22px;height:35px;background:#2c2a2c;border:1px solid #363436;border-radius:2px"></div>
<svg class="a" style="left:526px;top:712px" width="20" height="18"><path d="M2 9C4 2 7 1 9 7S14 17 17 9" fill="none" stroke="#c0b8b8" stroke-width="1.5"/></svg>
<div class="a" style="left:551px;top:704px;width:22px;height:35px;background:#2c2a2c;border:1px solid #363436;border-radius:2px"></div>
<svg class="a" style="left:551px;top:709px" width="22" height="22"><rect x="5.5" y="16" width="2.8" height="2.2" fill="#c8c4c6"/><rect x="5.5" y="13" width="2.8" height="2.2" fill="#c8c4c6"/><rect x="9.1" y="16" width="2.8" height="2.2" fill="#c8c4c6"/><rect x="9.1" y="13" width="2.8" height="2.2" fill="#c8c4c6"/><rect x="9.1" y="10" width="2.8" height="2.2" fill="#c8c4c6"/><rect x="9.1" y="7" width="2.8" height="2.2" fill="#c8c4c6"/><rect x="9.1" y="4" width="2.8" height="2.2" fill="#c8c4c6"/><rect x="12.7" y="16" width="2.8" height="2.2" fill="#c8c4c6"/><rect x="12.7" y="13" width="2.8" height="2.2" fill="#c8c4c6"/><rect x="12.7" y="10" width="2.8" height="2.2" fill="#c8c4c6"/></svg>
<div class="a" style="left:525px;top:741px;width:22px;height:35px;background:#2c2a2c;border:1px solid #363436;border-radius:2px"></div>
<svg class="a" style="left:526px;top:749px" width="20" height="18"><path d="M2 9C4 2 7 1 9 7S14 17 17 9" fill="none" stroke="#c0b8b8" stroke-width="1.5"/></svg>
<div class="a" style="left:551px;top:741px;width:22px;height:35px;background:#2c2a2c;border:1px solid #363436;border-radius:2px"></div>
<svg class="a" style="left:551px;top:746px" width="22" height="22"><rect x="5.5" y="16" width="2.8" height="2.2" fill="#c8c4c6"/><rect x="5.5" y="13" width="2.8" height="2.2" fill="#c8c4c6"/><rect x="9.1" y="16" width="2.8" height="2.2" fill="#c8c4c6"/><rect x="9.1" y="13" width="2.8" height="2.2" fill="#c8c4c6"/><rect x="9.1" y="10" width="2.8" height="2.2" fill="#c8c4c6"/><rect x="9.1" y="7" width="2.8" height="2.2" fill="#c8c4c6"/><rect x="9.1" y="4" width="2.8" height="2.2" fill="#c8c4c6"/><rect x="12.7" y="16" width="2.8" height="2.2" fill="#c8c4c6"/><rect x="12.7" y="13" width="2.8" height="2.2" fill="#c8c4c6"/><rect x="12.7" y="10" width="2.8" height="2.2" fill="#c8c4c6"/></svg>
<svg class="a" style="left:40px;top:781px" width="533" height="49"><rect x="0" y="0" width="533" height="49" fill="#3e3c3e"/><rect x="0" y="0" width="533" height="1" fill="#7a7474"/><rect x="0" y="0" width="2" height="49" fill="#7a7474"/><line x1="26.4" y1="1" x2="26.4" y2="49" stroke="#8a8484" stroke-width="1"/><line x1="52.5" y1="1" x2="52.5" y2="49" stroke="#8a8484" stroke-width="1"/><line x1="78.5" y1="1" x2="78.5" y2="49" stroke="#8a8484" stroke-width="1"/><line x1="104.6" y1="1" x2="104.6" y2="49" stroke="#8a8484" stroke-width="1"/><line x1="130.6" y1="1" x2="130.6" y2="49" stroke="#8a8484" stroke-width="1"/><line x1="156.7" y1="1" x2="156.7" y2="49" stroke="#8a8484" stroke-width="1"/><line x1="182.7" y1="1" x2="182.7" y2="49" stroke="#8a8484" stroke-width="1"/><line x1="208.8" y1="1" x2="208.8" y2="49" stroke="#8a8484" stroke-width="1"/><line x1="234.8" y1="1" x2="234.8" y2="49" stroke="#8a8484" stroke-width="1"/><line x1="260.9" y1="1" x2="260.9" y2="49" stroke="#8a8484" stroke-width="1"/><line x1="286.9" y1="1" x2="286.9" y2="49" stroke="#8a8484" stroke-width="1"/><line x1="312.9" y1="1" x2="312.9" y2="49" stroke="#8a8484" stroke-width="1"/><line x1="339.0" y1="1" x2="339.0" y2="49" stroke="#8a8484" stroke-width="1"/><line x1="365.1" y1="1" x2="365.1" y2="49" stroke="#8a8484" stroke-width="1"/><line x1="391.1" y1="1" x2="391.1" y2="49" stroke="#8a8484" stroke-width="1"/><line x1="417.1" y1="1" x2="417.1" y2="49" stroke="#8a8484" stroke-width="1"/><line x1="443.2" y1="1" x2="443.2" y2="49" stroke="#8a8484" stroke-width="1"/><line x1="469.2" y1="1" x2="469.2" y2="49" stroke="#8a8484" stroke-width="1"/><line x1="495.3" y1="1" x2="495.3" y2="49" stroke="#8a8484" stroke-width="1"/><line x1="521.4" y1="1" x2="521.4" y2="49" stroke="#8a8484" stroke-width="1"/><line x1="0" y1="25.5" x2="533" y2="25.5" stroke="#5a5658" stroke-width="1"/><polyline points="0,23.30 3,23.60 6,23.87 9,24.08 12,24.20 15,24.23 18,24.18 21,24.06 24,23.92 27,23.77 30,23.66 33,23.60 36,23.61 39,23.69 42,23.82 45,23.98 48,24.14 51,24.26 54,24.32 57,24.29 60,24.17 63,23.97 66,23.70 69,23.40 72,23.10 75,22.83 78,22.63 81,22.51 84,22.47 87,22.52 90,22.62 93,22.76 96,22.89 99,22.99 102,23.02 105,22.99 108,22.90 111,22.75 114,22.57 117,22.40 120,22.27 123,22.20 126,22.22 129,22.34 132,22.54 135,22.80 138,23.10 141,23.40 144,23.67 147,23.87 150,23.98 153,24.02 156,23.97 159,23.88 162,23.75 165,23.63 168,23.56 171,23.54 174,23.59 177,23.70 180,23.87 183,24.06 186,24.25 189,24.39 192,24.46 195,24.45 198,24.34 201,24.14 204,23.88 207,23.59 210,23.30 213,23.04 216,22.84 219,22.73 222,22.70 225,22.74 228,22.83 231,22.95 234,23.05 237,23.12 240,23.12 243,23.05 246,22.91 249,22.73 252,22.52 255,22.32 258,22.17 261,22.08 264,22.09 267,22.19 270,22.38 273,22.64 276,22.93 279,23.21 282,23.46 285,23.65 288,23.76 291,23.78 294,23.74 297,23.65 300,23.54 303,23.45 306,23.40 309,23.41 312,23.50 315,23.65 318,23.86 321,24.08 324,24.29 327,24.46 330,24.55 333,24.55 336,24.46 339,24.28 342,24.03 345,23.75 348,23.48 351,23.24 354,23.06 357,22.96 360,22.94 363,22.98 366,23.07 369,23.18 372,23.26 375,23.30 378,23.27 381,23.16 384,22.99 387,22.77 390,22.53 393,22.31 396,22.13 399,22.03 402,22.02 405,22.10 408,22.28 411,22.51 414,22.78 417,23.04 420,23.27 423,23.44 426,23.53 429,23.54 432,23.49 435,23.40 438,23.30 441,23.23 444,23.20 447,23.24 450,23.36 453,23.55 456,23.78 459,24.04 462,24.28 465,24.46 468,24.58 471,24.60 474,24.52 477,24.35 480,24.13 483,23.87 486,23.62 489,23.41 492,23.26 495,23.18 498,23.18 501,23.23 504,23.33 507,23.42 510,23.49 513,23.51 516,23.46 519,23.32 522,23.12 525,22.87 528,22.61 531,22.36" fill="none" stroke="#f8f8f8" stroke-width="2.3"/><rect x="519" y="34" width="10" height="6" rx="2.5" fill="#222" stroke="#d0d0d0" stroke-width="1"/></svg>
<div class="a" style="left:582px;top:750px;width:8px;height:84px;background:#242224;border-radius:4px"></div>
<div class="a" style="left:0;top:839px;width:1221px;height:1px;background:#454042"></div>
</body></html>
